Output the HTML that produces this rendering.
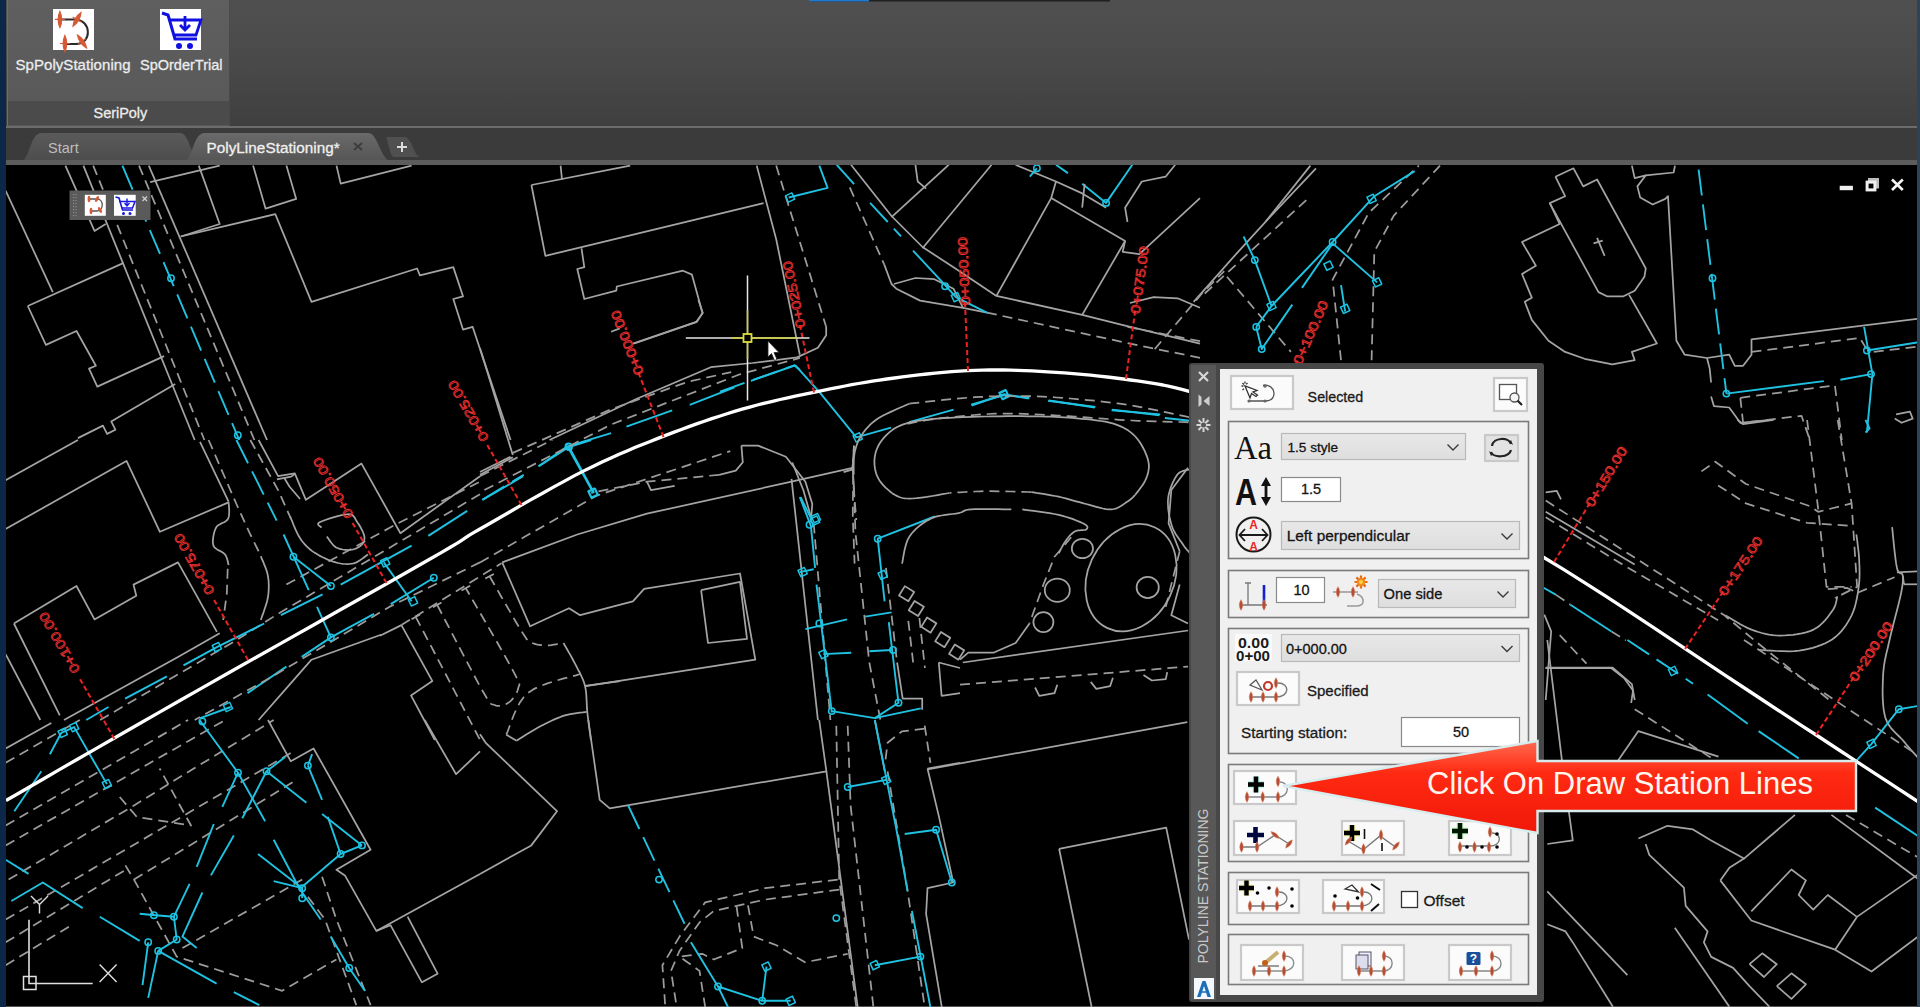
<!DOCTYPE html>
<html><head><meta charset="utf-8">
<style>
html,body{margin:0;padding:0;width:1920px;height:1007px;overflow:hidden;background:#000;font-family:"Liberation Sans",sans-serif;}
.a{position:absolute;box-sizing:border-box;}
svg.a{left:0;top:0;}
</style></head><body>
<svg class="a" width="1920" height="1007" viewBox="0 0 1920 1007">
<defs><linearGradient id="hdrg" x1="0" y1="0" x2="0" y2="1"><stop offset="0" stop-color="#4f4f4f"/><stop offset="0.15" stop-color="#4e4e4e"/><stop offset="0.5" stop-color="#494949"/><stop offset="1" stop-color="#3f3f3f"/></linearGradient><linearGradient id="rpg" x1="0" y1="0" x2="0" y2="1"><stop offset="0" stop-color="#5f5f5f"/><stop offset="1" stop-color="#585858"/></linearGradient><linearGradient id="tabg" x1="0" y1="0" x2="0" y2="1"><stop offset="0" stop-color="#6a6a6a"/><stop offset="1" stop-color="#555"/></linearGradient><linearGradient id="tab2g" x1="0" y1="0" x2="0" y2="1"><stop offset="0" stop-color="#5a5a5a"/><stop offset="1" stop-color="#4c4c4c"/></linearGradient><clipPath id="cvclip"><rect x="6" y="165" width="1911" height="842"/></clipPath></defs><rect x="0" y="0" width="1920" height="127" fill="url(#hdrg)"/><rect x="809" y="0" width="301" height="1.5" fill="#202020"/><rect x="809" y="0" width="60" height="1.5" fill="#1e7ad0"/><rect x="7" y="0" width="223" height="126" fill="url(#rpg)"/><rect x="7" y="0" width="1" height="126" fill="#6e6e6e"/><rect x="229" y="0" width="1" height="126" fill="#4a4a4a"/><rect x="8" y="101" width="221" height="24" fill="#4b4b4b"/><rect x="53" y="9" width="41" height="41" fill="#fff"/><path d="M60 19.5 H75 C92 20 92 44 76 44 H65" fill="none" stroke="#2a2a2a" stroke-width="2"/><path d="M59.9 11.399999999999999 Q63.5 19.4 59.9 27.4 Q56.3 19.4 59.9 11.399999999999999Z M54.9 19.4 H64.9" fill="#d65a36" stroke="#d65a36" stroke-width="1.2" transform="rotate(0 59.9 19.4)"/><path d="M77 11.399999999999999 Q80.6 19.4 77 27.4 Q73.4 19.4 77 11.399999999999999Z M72 19.4 H82" fill="#d65a36" stroke="#d65a36" stroke-width="1.2" transform="rotate(30 77 19.4)"/><path d="M64.9 35.5 Q68.5 43.5 64.9 51.5 Q61.300000000000004 43.5 64.9 35.5Z M59.900000000000006 43.5 H69.9" fill="#d65a36" stroke="#d65a36" stroke-width="1.2" transform="rotate(0 64.9 43.5)"/><path d="M82 33.5 Q85.6 41.5 82 49.5 Q78.4 41.5 82 33.5Z M77 41.5 H87" fill="#d65a36" stroke="#d65a36" stroke-width="1.2" transform="rotate(-35 82 41.5)"/><rect x="160" y="9" width="41" height="41" fill="#fff"/><path d="M162 13 L168 15 L175 39 H197" fill="none" stroke="#1010e0" stroke-width="3"/><path d="M170 20 H201 L196 35 H175" fill="none" stroke="#1010e0" stroke-width="2.8"/><path d="M185 16 V29 M180 25 L185 30 L190 25" fill="none" stroke="#1010e0" stroke-width="2.8"/><circle cx="179" cy="46" r="3" fill="#1010e0"/><circle cx="190" cy="46" r="3" fill="#1010e0"/><text x="15.5" y="69.7" font-size="15" fill="#ececec" stroke="#ececec" stroke-width="0.3" font-family="Liberation Sans, sans-serif" textLength="115">SpPolyStationing</text><text x="140" y="69.7" font-size="14.5" fill="#ececec" stroke="#ececec" stroke-width="0.3" font-family="Liberation Sans, sans-serif" textLength="82.5">SpOrderTrial</text><text x="93.6" y="118" font-size="14.5" fill="#ececec" stroke="#ececec" stroke-width="0.3" font-family="Liberation Sans, sans-serif" textLength="53.6">SeriPoly</text><rect x="0" y="126" width="1920" height="2" fill="#6c6c6c"/><rect x="0" y="128" width="1920" height="33" fill="#3b3b3b"/><path d="M22 161 C30 158 30 133 42 133 H180 C190 133 190 158 200 161 Z" fill="url(#tab2g)"/><path d="M185 161 C193 158 193 133 205 133 H368 C378 133 380 158 390 161 Z" fill="url(#tabg)"/><path d="M386 137 H404 C412 137 414 156 420 157 H394 C390 157 388 140 386 137 Z" fill="#505050"/><path d="M402 142 V152 M397 147 H407" stroke="#dcdcdc" stroke-width="2"/><text x="48" y="152.5" font-size="14.5" fill="#bdbdbd" font-family="Liberation Sans, sans-serif" textLength="30.7">Start</text><text x="206.4" y="152.5" font-size="15.3" fill="#f0f0f0" stroke="#f0f0f0" stroke-width="0.3" font-family="Liberation Sans, sans-serif" textLength="133.4">PolyLineStationing*</text><path d="M354 143 L362 150 M362 143 L354 150" stroke="#3c3c3c" stroke-width="1.8"/><rect x="0" y="160" width="1920" height="5" fill="#5c5c5c"/><rect x="6" y="165" width="1911" height="842" fill="#000"/><rect x="0" y="1006" width="1920" height="1" fill="#555"/><rect x="0" y="0" width="6" height="1007" fill="#0c2748"/><rect x="1917" y="0" width="3" height="1007" fill="#2e4358"/>
<g clip-path="url(#cvclip)" fill="none" stroke-linejoin="round"><path d="M5.6 190.6 L52.8 292.1" stroke="#a4a4a4" stroke-width="1.75"/><path d="M27.8 306.0 L123.7 262.9" stroke="#a4a4a4" stroke-width="1.75"/><path d="M27.8 306.0 L45.9 344.9 L76.5 331.0 L95.9 365.8 L89.0 368.6 L97.3 386.6 L164.1 356.1" stroke="#a4a4a4" stroke-width="1.75"/><path d="M150.2 182.2 L219.7 165.6" stroke="#a4a4a4" stroke-width="1.75"/><path d="M198.8 165.6 L219.7 224.0 L180.8 236.5" stroke="#a4a4a4" stroke-width="1.75"/><path d="M65.4 165.6 L94.5 230.9 L105.7 224.0" stroke="#a4a4a4" stroke-width="1.75"/><path d="M253.1 165.6 L265.6 208.7 L296.2 198.9 L286.4 165.6" stroke="#a4a4a4" stroke-width="1.75"/><path d="M180.8 236.5 L275.3 214.2 L311.5 301.8 L417.1 268.5 L419.9 275.4 L453.3 267.1 L463.0 296.3 L453.3 299.0 L463.0 329.6 L472.7 326.9 L480.0 349.1" stroke="#a4a4a4" stroke-width="1.75"/><path d="M336.5 165.6 L340.7 183.6 L411.6 165.6" stroke="#a4a4a4" stroke-width="1.75"/><path d="M77.9 438.1 L102.9 425.6 L107.1 433.9 L115.4 429.7 L111.2 421.4 L175.2 383.9" stroke="#a4a4a4" stroke-width="1.75"/><path d="M83.4 165.6 L194.7 440.0" stroke="#a4a4a4" stroke-width="1.75"/><path d="M93.2 165.6 L204.4 440.0" stroke="#9c9c9c" stroke-width="1.75" stroke-dasharray="10 6"/><path d="M122.4 165.6 L239.2 440.0" stroke="#20c2e2" stroke-width="1.9" stroke-dasharray="26 9"/><path d="M139.0 165.6 L254.4 440.0" stroke="#9c9c9c" stroke-width="1.75" stroke-dasharray="10 6"/><path d="M148.8 165.6 L267.0 440.0" stroke="#a4a4a4" stroke-width="1.75"/><circle cx="171.0" cy="278.2" r="3.2" stroke="#1cc4e4" stroke-width="1.5"/><circle cx="237.8" cy="435.3" r="3.2" stroke="#1cc4e4" stroke-width="1.5"/><path d="M560.6 165.6 L562.0 179.5" stroke="#a4a4a4" stroke-width="1.75"/><path d="M531.4 185.0 L630.2 165.6" stroke="#a4a4a4" stroke-width="1.75"/><path d="M531.4 185.0 L545.4 255.9 L763.6 203.1" stroke="#a4a4a4" stroke-width="1.75"/><path d="M581.5 248.4 L584.3 267.1 L577.3 269.0 L584.3 299.0 L616.3 290.7 L616.8 286.5 L683.0 270.7 L691.9 274.6 L702.5 312.9 L696.9 321.8 L634.3 343.5" stroke="#a4a4a4" stroke-width="1.75"/><path d="M480.0 349.1 L510.6 440.0" stroke="#a4a4a4" stroke-width="1.75"/><path d="M756.7 165.6 L776.2 239.3 L799.8 354.7" stroke="#a4a4a4" stroke-width="1.75"/><path d="M776.2 165.6 L826.2 326.9" stroke="#9c9c9c" stroke-width="1.75" stroke-dasharray="10 6"/><path d="M826.2 326.9 L826.2 335.2 L817.9 347.7 L797.0 357.4 L752.5 363.0 L710.8 367.2 L635.7 399.2 L549.5 440.0" stroke="#a4a4a4" stroke-width="1.75"/><path d="M819.3 165.6 L827.6 187.8 L788.7 197.5" stroke="#20c2e2" stroke-width="1.9"/><rect x="786.6" y="194.0" width="7" height="7" stroke="#1cc4e4" stroke-width="1.5" transform="rotate(-25 790.1 197.5)"/><path d="M1193.6 301.8 L1238.1 251.8 L1268.7 218.4 L1316.0 168.3" stroke="#a4a4a4" stroke-width="1.75"/><path d="M1154.7 349.1 L1201.9 293.5 L1224.2 271.2" stroke="#9c9c9c" stroke-width="1.75" stroke-dasharray="10 6"/><path d="M1204.7 293.5 L1307.6 198.9" stroke="#9c9c9c" stroke-width="1.75" stroke-dasharray="10 6"/><path d="M1227.0 276.8 L1290.9 351.9" stroke="#9c9c9c" stroke-width="1.75" stroke-dasharray="10 6"/><path d="M1265.9 221.2 L1310.4 165.6" stroke="#a4a4a4" stroke-width="1.75"/><path d="M1371.6 360.2 L1374.3 251.8 L1393.8 215.6 L1440.0 165.6" stroke="#9c9c9c" stroke-width="1.75" stroke-dasharray="10 6"/><path d="M1341.0 360.2 L1332.6 279.6 L1368.8 212.8 L1418.8 165.6" stroke="#9c9c9c" stroke-width="1.75" stroke-dasharray="10 6"/><path d="M1243.6 236.5 L1254.8 260.1 L1271.5 306.0 L1302.0 274.0 L1332.6 242.0 L1374.3 196.2 L1414.7 171.1" stroke="#20c2e2" stroke-width="1.9"/><path d="M1256.2 326.9 L1261.7 349.1 L1292.3 304.6" stroke="#20c2e2" stroke-width="1.9"/><path d="M1256.2 326.9 L1271.5 306.0" stroke="#20c2e2" stroke-width="1.9"/><path d="M1332.6 243.4 L1377.1 282.4" stroke="#20c2e2" stroke-width="1.9"/><path d="M1302.0 287.9 L1332.6 243.4" stroke="#20c2e2" stroke-width="1.9"/><path d="M1341.0 285.1 L1345.2 311.6" stroke="#20c2e2" stroke-width="1.9"/><circle cx="1254.8" cy="260.1" r="3.2" stroke="#1cc4e4" stroke-width="1.5"/><rect x="1268.0" y="302.5" width="7" height="7" stroke="#1cc4e4" stroke-width="1.5" transform="rotate(-25 1271.5 306.0)"/><circle cx="1256.2" cy="326.9" r="3.2" stroke="#1cc4e4" stroke-width="1.5"/><circle cx="1261.7" cy="349.1" r="3.2" stroke="#1cc4e4" stroke-width="1.5"/><circle cx="1332.6" cy="242.0" r="3.2" stroke="#1cc4e4" stroke-width="1.5"/><rect x="1373.6" y="278.9" width="7" height="7" stroke="#1cc4e4" stroke-width="1.5" transform="rotate(-25 1377.1 282.4)"/><rect x="1341.7" y="305.3" width="7" height="7" stroke="#1cc4e4" stroke-width="1.5" transform="rotate(-25 1345.2 308.8)"/><rect x="1325.0" y="262.2" width="7" height="7" stroke="#1cc4e4" stroke-width="1.5" transform="rotate(-25 1328.5 265.7)"/><rect x="1368.1" y="195.4" width="7" height="7" stroke="#1cc4e4" stroke-width="1.5" transform="rotate(-25 1371.6 198.9)"/><path d="M971.1 404.7 L1004.5 395.0 L1029.5 397.8" stroke="#20c2e2" stroke-width="1.9"/><rect x="1001.0" y="391.5" width="7" height="7" stroke="#1cc4e4" stroke-width="1.5" transform="rotate(-25 1004.5 395.0)"/><path d="M1049.0 400.5 L1094.9 407.5" stroke="#20c2e2" stroke-width="1.9"/><path d="M1111.6 410.3 L1160.2 414.4" stroke="#20c2e2" stroke-width="1.9"/><path d="M1555.4 176.7 L1573.5 168.3 L1583.2 186.4 L1597.1 179.5 L1645.8 268.5 L1644.4 276.8 L1634.7 290.7 L1623.5 296.3 L1606.9 296.3 L1598.5 292.1 L1549.8 203.1 L1565.1 196.2 L1555.4 176.7" stroke="#a4a4a4" stroke-width="1.75"/><path d="M1549.8 203.1 L1559.6 224.0 L1522.0 242.0 L1535.9 265.7 L1522.0 274.0 L1531.8 297.7 L1524.8 301.8 L1531.8 319.9 L1548.5 340.8 L1565.1 351.9 L1584.6 358.8 L1612.4 364.4 L1634.7 360.2 L1631.9 351.9 L1656.9 343.5 L1629.1 294.9" stroke="#a4a4a4" stroke-width="1.75"/><path d="M1593.5 243.4 L1602.7 240.6" stroke="#a4a4a4" stroke-width="1.75"/><path d="M1597.1 237.9 L1604.6 255.9" stroke="#a4a4a4" stroke-width="1.75"/><path d="M1631.9 165.6 L1634.7 178.1 L1645.8 175.3 L1637.4 186.4 L1640.2 197.5 L1652.7 204.5 L1665.3 198.9 L1668.0 196.2 L1676.4 340.8 L1684.7 354.7 L1707.0 358.0 L1729.2 354.7 L1734.8 365.8 L1743.1 365.8 L1751.5 354.7 L1751.5 339.4 L1920.0 318.5" stroke="#a4a4a4" stroke-width="1.75"/><path d="M1645.8 175.3 L1673.6 172.5 L1675.0 165.6" stroke="#a4a4a4" stroke-width="1.75"/><path d="M1707.0 358.0 L1709.7 368.6 L1711.1 382.5" stroke="#a4a4a4" stroke-width="1.75"/><path d="M1711.1 396.4 L1713.9 406.1 L1729.2 407.5 L1740.3 422.8 L1768.1 420.0" stroke="#a4a4a4" stroke-width="1.75"/><path d="M1751.5 351.9 L1859.9 338.0 L1868.3 351.9" stroke="#9c9c9c" stroke-width="1.75" stroke-dasharray="10 6"/><path d="M1873.8 351.9 L1920.0 346.3" stroke="#9c9c9c" stroke-width="1.75" stroke-dasharray="10 6"/><path d="M1740.3 397.8 L1834.9 385.3 L1841.8 440.0" stroke="#9c9c9c" stroke-width="1.75" stroke-dasharray="10 6"/><path d="M1740.3 397.8 L1743.1 422.8 L1801.5 415.8 L1809.9 440.0" stroke="#9c9c9c" stroke-width="1.75" stroke-dasharray="10 6"/><path d="M1698.6 169.7 L1726.4 393.6" stroke="#20c2e2" stroke-width="1.9" stroke-dasharray="26 9"/><path d="M1726.4 393.6 L1823.8 381.1" stroke="#20c2e2" stroke-width="1.9"/><path d="M1840.4 379.7 L1871.0 374.1" stroke="#20c2e2" stroke-width="1.9"/><path d="M1864.1 326.9 L1872.4 374.1 L1866.9 432.5" stroke="#20c2e2" stroke-width="1.9"/><path d="M1866.9 350.5 L1920.0 342.1" stroke="#20c2e2" stroke-width="1.9"/><circle cx="1712.5" cy="278.2" r="3.2" stroke="#1cc4e4" stroke-width="1.5"/><circle cx="1726.4" cy="393.6" r="3.2" stroke="#1cc4e4" stroke-width="1.5"/><circle cx="1866.9" cy="350.5" r="3.2" stroke="#1cc4e4" stroke-width="1.5"/><circle cx="1871.0" cy="374.1" r="3.2" stroke="#1cc4e4" stroke-width="1.5"/><path d="M1896.1 414.4 L1910.0 411.7 L1912.7 418.6 L1901.6 422.8 L1894.7 418.6" stroke="#a4a4a4" stroke-width="1.75"/><path d="M5.6 480.3 L77.9 440.0" stroke="#a4a4a4" stroke-width="1.75"/><path d="M5.6 529.0 L126.5 460.9 L159.9 531.8 L228.0 502.6" stroke="#a4a4a4" stroke-width="1.75"/><path d="M13.9 623.5 L76.5 586.0 L94.5 619.4 L136.3 595.7 L133.5 584.6 L178.0 562.4 L216.9 631.9" stroke="#a4a4a4" stroke-width="1.75"/><path d="M13.9 623.5 L59.8 715.3" stroke="#a4a4a4" stroke-width="1.75"/><path d="M5.6 654.1 L40.3 720.0" stroke="#a4a4a4" stroke-width="1.75"/><path d="M208.6 440.0 L236.4 504.0 L250.3 534.5 L261.4 556.8" stroke="#9c9c9c" stroke-width="1.75" stroke-dasharray="10 6"/><path d="M258.6 440.0 L278.1 476.2 L294.8 473.4 L305.9 499.8 L361.5 463.6 L400.4 533.2 L480.0 476.2" stroke="#a4a4a4" stroke-width="1.75"/><path d="M250.3 440.0 L278.1 490.1 L290.6 517.9" stroke="#9c9c9c" stroke-width="1.75" stroke-dasharray="10 6"/><path d="M64.0 720.0 L178.0 656.9 L219.7 633.3" stroke="#a4a4a4" stroke-width="1.75"/><path d="M100.1 720.0 L236.4 640.2 L278.1 613.8 L480.0 494.2" stroke="#9c9c9c" stroke-width="1.75" stroke-dasharray="10 6"/><path d="M286.4 584.6 L397.7 523.4 L480.0 481.7" stroke="#9c9c9c" stroke-width="1.75" stroke-dasharray="10 6"/><path d="M86.2 720.0 L108.5 707.0" stroke="#20c2e2" stroke-width="1.9" stroke-dasharray="26 9"/><path d="M125.1 698.6 L166.9 676.4" stroke="#20c2e2" stroke-width="1.9"/><path d="M183.5 665.3 L216.9 647.2 L264.2 623.5" stroke="#20c2e2" stroke-width="1.9"/><path d="M280.9 615.2 L322.6 594.3" stroke="#20c2e2" stroke-width="1.9"/><path d="M340.7 584.6 L411.6 545.7" stroke="#20c2e2" stroke-width="1.9"/><path d="M428.3 535.9 L467.2 510.9" stroke="#20c2e2" stroke-width="1.9"/><path d="M390.7 604.1 L433.8 577.7" stroke="#20c2e2" stroke-width="1.9"/><path d="M301.7 656.9 L330.9 637.4 L374.0 613.8" stroke="#20c2e2" stroke-width="1.9"/><path d="M247.5 693.1 L286.4 666.6" stroke="#20c2e2" stroke-width="1.9"/><path d="M200.2 718.1 L230.8 707.0" stroke="#20c2e2" stroke-width="1.9"/><path d="M480.0 562.4 L389.3 606.9 L333.7 640.2 L272.5 676.4 L194.7 720.0" stroke="#9c9c9c" stroke-width="1.75" stroke-dasharray="10 6"/><path d="M258.6 720.0 L292.0 681.9 L311.5 659.7 L350.4 645.8 L381.0 634.7" stroke="#a4a4a4" stroke-width="1.75"/><path d="M293.4 556.8 L330.9 586.0" stroke="#20c2e2" stroke-width="1.9"/><path d="M283.6 534.5 L308.7 590.2" stroke="#20c2e2" stroke-width="1.9"/><path d="M383.8 562.4 L411.6 601.3" stroke="#20c2e2" stroke-width="1.9"/><path d="M317.0 606.9 L330.9 637.4" stroke="#20c2e2" stroke-width="1.9"/><circle cx="293.4" cy="556.8" r="3.2" stroke="#1cc4e4" stroke-width="1.5"/><circle cx="330.9" cy="586.0" r="3.2" stroke="#1cc4e4" stroke-width="1.5"/><rect x="381.7" y="558.9" width="7" height="7" stroke="#1cc4e4" stroke-width="1.5" transform="rotate(-25 385.2 562.4)"/><rect x="409.5" y="597.8" width="7" height="7" stroke="#1cc4e4" stroke-width="1.5" transform="rotate(-25 413.0 601.3)"/><circle cx="433.8" cy="577.7" r="3.2" stroke="#1cc4e4" stroke-width="1.5"/><rect x="213.4" y="643.7" width="7" height="7" stroke="#1cc4e4" stroke-width="1.5" transform="rotate(-25 216.9 647.2)"/><circle cx="330.9" cy="637.4" r="3.2" stroke="#1cc4e4" stroke-width="1.5"/><rect x="224.5" y="703.5" width="7" height="7" stroke="#1cc4e4" stroke-width="1.5" transform="rotate(-25 228.0 707.0)"/><path d="M538.4 466.4 L569.0 447.0 L591.2 440.0" stroke="#20c2e2" stroke-width="1.9"/><path d="M569.0 447.0 L594.0 492.8" stroke="#20c2e2" stroke-width="1.9"/><circle cx="569.0" cy="447.0" r="3.2" stroke="#1cc4e4" stroke-width="1.5"/><rect x="589.1" y="489.3" width="7" height="7" stroke="#1cc4e4" stroke-width="1.5" transform="rotate(-25 592.6 492.8)"/><path d="M482.8 499.8 L523.1 476.2" stroke="#20c2e2" stroke-width="1.9"/><path d="M480.0 476.2 L552.3 440.0" stroke="#9c9c9c" stroke-width="1.75" stroke-dasharray="10 6"/><path d="M480.0 562.4 L596.8 495.6 L730.3 451.1" stroke="#9c9c9c" stroke-width="1.75" stroke-dasharray="10 6"/><path d="M741.4 445.6 L742.8 462.2 L735.8 470.6 L719.2 474.8" stroke="#a4a4a4" stroke-width="1.75"/><path d="M719.2 474.8 L646.9 481.7 L591.2 492.8" stroke="#9c9c9c" stroke-width="1.75" stroke-dasharray="10 6"/><path d="M646.9 481.7 L651.0 490.1 L674.7 485.9" stroke="#a4a4a4" stroke-width="1.75"/><path d="M480.0 472.0 L510.6 456.7" stroke="#a4a4a4" stroke-width="1.75"/><path d="M741.4 445.6 L758.1 445.6 L785.9 456.7 L805.4 481.7 L812.3 504.0 L810.9 520.6" stroke="#a4a4a4" stroke-width="1.75"/><path d="M502.2 562.4 L577.3 534.5 L646.9 513.7 L791.5 481.7" stroke="#a4a4a4" stroke-width="1.75"/><path d="M791.5 481.7 L852.6 467.8" stroke="#a4a4a4" stroke-width="1.75"/><path d="M852.6 467.8 L854.0 445.6" stroke="#9c9c9c" stroke-width="1.75" stroke-dasharray="10 6"/><path d="M502.2 562.4 L530.1 626.3 L569.0 608.2 L580.1 615.2 L632.9 601.3 L644.1 588.8 L740.0 573.5 L755.3 659.7 L585.7 686.1" stroke="#a4a4a4" stroke-width="1.75"/><path d="M701.1 590.2 L740.0 581.8 L747.0 638.8 L708.0 643.0 L701.1 590.2" stroke="#a4a4a4" stroke-width="1.75"/><path d="M791.5 478.9 L817.9 720.0" stroke="#a4a4a4" stroke-width="1.75"/><path d="M813.7 523.4 L830.4 720.0" stroke="#9c9c9c" stroke-width="1.75" stroke-dasharray="10 6"/><path d="M854.0 487.3 L855.4 531.8 L869.3 662.5 L880.4 720.0" stroke="#9c9c9c" stroke-width="1.75" stroke-dasharray="10 6"/><path d="M854.0 445.6 L852.6 467.8 L854.0 487.3" stroke="#a4a4a4" stroke-width="1.75"/><path d="M886.0 567.9 L897.1 662.5" stroke="#9c9c9c" stroke-width="1.75" stroke-dasharray="10 6"/><path d="M908.3 620.8 L913.8 668.0" stroke="#9c9c9c" stroke-width="1.75" stroke-dasharray="10 6"/><path d="M919.4 618.0 L924.9 668.0" stroke="#9c9c9c" stroke-width="1.75" stroke-dasharray="10 6"/><path d="M897.1 662.5 L902.7 698.6 L922.2 698.6 L922.2 709.7" stroke="#a4a4a4" stroke-width="1.75"/><path d="M938.8 662.5 L960.0 668.0" stroke="#a4a4a4" stroke-width="1.75"/><path d="M938.8 662.5 L941.6 695.8 L960.0 693.1" stroke="#a4a4a4" stroke-width="1.75"/><path d="M799.8 497.0 L810.9 526.2 L815.1 567.9" stroke="#20c2e2" stroke-width="1.9"/><rect x="811.6" y="517.1" width="7" height="7" stroke="#1cc4e4" stroke-width="1.5" transform="rotate(-25 815.1 520.6)"/><circle cx="809.5" cy="524.8" r="3.2" stroke="#1cc4e4" stroke-width="1.5"/><path d="M799.8 572.1 L813.7 569.3" stroke="#20c2e2" stroke-width="1.9"/><rect x="799.1" y="568.6" width="7" height="7" stroke="#1cc4e4" stroke-width="1.5" transform="rotate(-25 802.6 572.1)"/><path d="M816.5 584.6 L831.8 712.5" stroke="#20c2e2" stroke-width="1.9"/><path d="M805.4 629.1 L847.1 619.4" stroke="#20c2e2" stroke-width="1.9"/><path d="M823.4 654.1 L851.2 652.7" stroke="#20c2e2" stroke-width="1.9"/><circle cx="819.3" cy="623.5" r="3.2" stroke="#1cc4e4" stroke-width="1.5"/><rect x="819.9" y="650.6" width="7" height="7" stroke="#1cc4e4" stroke-width="1.5" transform="rotate(-25 823.4 654.1)"/><circle cx="831.8" cy="711.1" r="3.2" stroke="#1cc4e4" stroke-width="1.5"/><path d="M934.7 516.5 L877.7 538.7 L884.6 601.3" stroke="#20c2e2" stroke-width="1.9"/><circle cx="877.7" cy="538.7" r="3.2" stroke="#1cc4e4" stroke-width="1.5"/><rect x="879.2" y="571.4" width="7" height="7" stroke="#1cc4e4" stroke-width="1.5" transform="rotate(-25 882.7 574.9)"/><path d="M865.2 616.6 L891.6 612.4" stroke="#20c2e2" stroke-width="1.9"/><path d="M869.3 651.3 L891.6 650.0" stroke="#20c2e2" stroke-width="1.9"/><path d="M888.8 622.1 L898.5 702.8 L874.9 718.1" stroke="#20c2e2" stroke-width="1.9"/><path d="M831.8 711.1 L874.9 718.1 L920.8 708.4" stroke="#20c2e2" stroke-width="1.9"/><circle cx="893.0" cy="650.0" r="3.2" stroke="#1cc4e4" stroke-width="1.5"/><circle cx="898.5" cy="702.8" r="3.2" stroke="#1cc4e4" stroke-width="1.5"/><path d="M792.3 462.5 L803.4 490.3 L811.8 520.0" stroke="#a4a4a4" stroke-width="1.75"/><path d="M720.0 391.6 L795.1 365.1" stroke="#20c2e2" stroke-width="1.9" stroke-dasharray="26 9"/><path d="M795.1 365.1 L820.1 392.9 L856.3 437.4 L891.0 427.7" stroke="#20c2e2" stroke-width="1.9"/><rect x="854.2" y="433.9" width="7" height="7" stroke="#1cc4e4" stroke-width="1.5" transform="rotate(-25 857.7 437.4)"/><path d="M909.1 422.1 L953.6 409.6" stroke="#20c2e2" stroke-width="1.9"/><path d="M971.7 405.5 L1003.6 394.3 L1028.7 398.5" stroke="#20c2e2" stroke-width="1.9"/><rect x="1000.1" y="390.8" width="7" height="7" stroke="#1cc4e4" stroke-width="1.5" transform="rotate(-25 1003.6 394.3)"/><path d="M1048.1 400.7 L1095.4 406.9" stroke="#20c2e2" stroke-width="1.9"/><path d="M1112.1 409.6 L1159.4 415.2" stroke="#20c2e2" stroke-width="1.9"/><path d="M1164.9 418.0 L1190.0 420.8" stroke="#20c2e2" stroke-width="1.9"/><path d="M800.6 497.2 L811.8 520.0" stroke="#20c2e2" stroke-width="1.9"/><rect x="812.4" y="514.6" width="7" height="7" stroke="#1cc4e4" stroke-width="1.5" transform="rotate(-25 815.9 518.1)"/><path d="M853.5 486.1 L856.3 520.0" stroke="#9c9c9c" stroke-width="1.75" stroke-dasharray="10 6"/><path d="M1071.2 537.3 L1054.5 556.8 L1043.4 584.6 L1029.5 623.5" stroke="#9c9c9c" stroke-width="1.75" stroke-dasharray="10 6"/><path d="M1029.5 623.5 L1015.6 643.0 L993.4 652.7 L968.3 652.7 L960.0 659.7" stroke="#a4a4a4" stroke-width="1.75"/><path d="M1188.0 467.8 L1171.3 490.1 L1168.6 523.4 L1179.7 551.2" stroke="#a4a4a4" stroke-width="1.75"/><path d="M1179.7 551.2 L1171.3 584.6 L1165.8 606.9" stroke="#9c9c9c" stroke-width="1.75" stroke-dasharray="10 6"/><path d="M962.8 662.5 L1188.0 630.5" stroke="#a4a4a4" stroke-width="1.75"/><path d="M960.0 684.7 L1188.0 666.6" stroke="#9c9c9c" stroke-width="1.75" stroke-dasharray="10 6"/><path d="M1035.1 687.5 L1039.3 695.8 L1054.5 693.1 L1057.3 684.7" stroke="#a4a4a4" stroke-width="1.75"/><path d="M1090.7 681.9 L1096.3 688.9 L1110.2 686.1 L1112.9 677.8" stroke="#a4a4a4" stroke-width="1.75"/><path d="M1143.5 675.0 L1151.9 680.5 L1165.8 679.2 L1167.2 672.2" stroke="#a4a4a4" stroke-width="1.75"/><path d="M1179.7 584.6 L1171.3 615.2 L1188.0 623.5" stroke="#a4a4a4" stroke-width="1.75"/><path d="M851.0 164.8 L891.5 216.0 L922.5 247.0 L953.5 267.3 L996.4 295.9 L1082.2 314.9 L1125.1 325.7 L1200.0 343.6" stroke="#a4a4a4" stroke-width="1.75"/><path d="M849.8 187.4 L884.4 264.9" stroke="#9c9c9c" stroke-width="1.75" stroke-dasharray="10 6"/><path d="M884.4 264.9 L891.5 284.0 L896.3 288.7 L920.1 300.6 L963.0 307.8 L986.9 312.6" stroke="#a4a4a4" stroke-width="1.75"/><path d="M893.9 284.0 L915.4 278.0 L934.4 279.2 L953.5 288.7 L963.0 307.8" stroke="#a4a4a4" stroke-width="1.75"/><path d="M986.9 312.6 L1129.9 343.6 L1200.0 357.9" stroke="#9c9c9c" stroke-width="1.75" stroke-dasharray="10 6"/><path d="M891.5 217.2 L948.7 164.8" stroke="#a4a4a4" stroke-width="1.75"/><path d="M922.5 248.2 L991.6 164.8" stroke="#a4a4a4" stroke-width="1.75"/><path d="M996.4 295.9 L1051.2 198.1 L1125.1 241.0 L1082.2 314.9" stroke="#a4a4a4" stroke-width="1.75"/><path d="M1051.2 198.1 L1056.0 181.5 L1015.5 164.8" stroke="#a4a4a4" stroke-width="1.75"/><path d="M1056.0 181.5 L1082.2 193.4 L1106.1 207.7" stroke="#a4a4a4" stroke-width="1.75"/><path d="M1125.1 241.0 L1122.7 251.8 L1139.4 254.2 L1200.0 198.1" stroke="#a4a4a4" stroke-width="1.75"/><path d="M1129.9 303.0 L1153.7 297.1 L1177.6 298.3 L1200.0 307.8" stroke="#a4a4a4" stroke-width="1.75"/><path d="M1127.5 222.0 L1125.1 207.7 L1141.8 181.5 L1165.6 176.7 L1175.2 164.8" stroke="#a4a4a4" stroke-width="1.75"/><path d="M913.0 250.6 L946.3 286.3 L955.9 297.1 L986.9 312.6" stroke="#20c2e2" stroke-width="1.9"/><circle cx="945.1" cy="286.3" r="3.2" stroke="#1cc4e4" stroke-width="1.5"/><rect x="952.4" y="293.6" width="7" height="7" stroke="#1cc4e4" stroke-width="1.5" transform="rotate(-25 955.9 297.1)"/><path d="M836.7 164.8 L858.1 188.6" stroke="#20c2e2" stroke-width="1.9" stroke-dasharray="26 9"/><path d="M870.1 202.9 L901.0 236.3" stroke="#20c2e2" stroke-width="1.9" stroke-dasharray="26 9"/><path d="M1029.8 176.7 L1036.9 168.3" stroke="#20c2e2" stroke-width="1.9"/><path d="M1056.0 164.8 L1067.9 173.1" stroke="#20c2e2" stroke-width="1.9"/><path d="M1082.2 183.8 L1106.1 202.9 L1132.3 164.8" stroke="#20c2e2" stroke-width="1.9"/><circle cx="1036.9" cy="168.3" r="3.2" stroke="#1cc4e4" stroke-width="1.5"/><circle cx="1106.1" cy="202.9" r="3.2" stroke="#1cc4e4" stroke-width="1.5"/><path d="M1127.5 326.9 L1200.0 341.2" stroke="#9c9c9c" stroke-width="1.75" stroke-dasharray="10 6"/><path d="M1082.2 207.7 L1084.6 183.8" stroke="#a4a4a4" stroke-width="1.75"/><path d="M915.4 164.8 L917.7 181.5 L926.1 188.6" stroke="#a4a4a4" stroke-width="1.75"/><path d="M482.2 499.9 L523.7 474.7" stroke="#20c2e2" stroke-width="1.9" stroke-dasharray="26 9"/><path d="M539.0 466.0 L567.4 446.4 L611.1 433.2" stroke="#20c2e2" stroke-width="1.9"/><path d="M626.4 426.7 L672.2 410.3" stroke="#20c2e2" stroke-width="1.9"/><path d="M689.7 404.8 L734.5 387.4" stroke="#20c2e2" stroke-width="1.9"/><path d="M750.9 380.8 L794.5 365.5 L800.0 369.9" stroke="#20c2e2" stroke-width="1.9"/><path d="M567.4 446.4 L593.6 493.3" stroke="#20c2e2" stroke-width="1.9"/><circle cx="568.5" cy="446.4" r="3.2" stroke="#1cc4e4" stroke-width="1.5"/><rect x="590.1" y="489.8" width="7" height="7" stroke="#1cc4e4" stroke-width="1.5" transform="rotate(-25 593.6 493.3)"/><path d="M484.4 490.0 L611.1 424.5 L739.9 374.3 L800.0 357.9" stroke="#9c9c9c" stroke-width="1.75" stroke-dasharray="10 6"/><path d="M512.8 452.9 L611.1 409.2 L687.5 381.9 L731.2 372.1" stroke="#9c9c9c" stroke-width="1.75" stroke-dasharray="10 6"/><path d="M480.0 474.7 L512.8 457.3" stroke="#a4a4a4" stroke-width="1.75"/><path d="M480.0 348.1 L512.8 455.1" stroke="#a4a4a4" stroke-width="1.75"/><path d="M632.9 343.7 L696.3 321.8 L702.8 313.1 L698.4 300.0" stroke="#a4a4a4" stroke-width="1.75"/><path d="M611.1 331.7 L619.8 328.4" stroke="#a4a4a4" stroke-width="1.75"/><path d="M853.7 474.8 L853.7 473.1 L853.7 470.8 L853.7 468.0 L853.7 465.0 L853.8 461.8 L853.9 458.6 L854.2 455.6 L854.6 452.9 L855.1 450.4 L855.8 448.0 L856.5 445.7 L857.3 443.5 L858.2 441.2 L859.3 439.0 L860.5 436.9 L861.9 434.7 L863.4 432.6 L865.0 430.4 L866.7 428.3 L868.6 426.3 L870.7 424.2 L873.0 422.2 L875.5 420.3 L878.3 418.3 L881.7 416.3 L885.7 414.2 L890.2 412.1 L894.8 410.0 L899.3 408.0 L903.4 406.3 L906.8 404.8 L909.3 403.7" stroke="#a4a4a4" stroke-width="1.75"/><path d="M909.3 403.7 L913.8 403.2 L919.9 402.5 L927.1 401.7 L935.0 400.8 L943.4 399.9 L951.9 399.0 L960.1 398.3 L967.6 397.7 L974.6 397.2 L981.5 396.9 L988.4 396.5 L995.2 396.3 L1001.9 396.1 L1008.7 396.0 L1015.5 396.0 L1022.3 396.0 L1029.1 396.1 L1036.0 396.4 L1042.8 396.7 L1049.6 397.0 L1056.5 397.5 L1063.3 398.0 L1070.2 398.5 L1077.0 399.1 L1083.8 399.7 L1090.6 400.3 L1097.4 401.0 L1104.1 401.8 L1110.9 402.6 L1117.8 403.4 L1124.7 404.4 L1131.7 405.5 L1139.2 406.8 L1147.4 408.4 L1155.9 410.1 L1164.3 411.9 L1172.2 413.6 L1179.4 415.1 L1185.5 416.4 L1190.0 417.4" stroke="#9c9c9c" stroke-width="1.75" stroke-dasharray="10 6"/><path d="M853.1 474.8 L852.8 516.7 L854.6 563.6" stroke="#9c9c9c" stroke-width="1.75" stroke-dasharray="10 6"/><path d="M907.4 423.7 L909.8 423.3 L912.8 422.7 L916.4 422.0 L920.4 421.3 L924.9 420.5 L929.8 419.7 L934.9 419.0 L940.3 418.3 L946.1 417.6 L952.6 417.0 L959.6 416.3 L966.8 415.6 L974.1 415.0 L981.4 414.4 L988.4 414.0 L994.9 413.7 L1001.0 413.5 L1006.9 413.5 L1012.7 413.6 L1018.3 413.7 L1023.8 413.9 L1029.3 414.1 L1034.9 414.4 L1040.5 414.6 L1046.2 414.9 L1051.9 415.2 L1057.6 415.5 L1063.3 415.9 L1069.0 416.2 L1074.7 416.6 L1080.4 417.0 L1086.1 417.4 L1091.7 417.8 L1097.2 418.2 L1102.6 418.6 L1108.1 419.0 L1113.7 419.4 L1119.4 419.8 L1125.4 420.2 L1131.7 420.5 L1138.8 420.8 L1146.7 421.1 L1155.2 421.3 L1163.7 421.6 L1171.8 421.8 L1179.2 422.0 L1185.4 422.2 L1190.0 422.3" stroke="#9c9c9c" stroke-width="1.75" stroke-dasharray="10 6"/><path d="M949.4 493.0 L946.5 493.5 L942.4 494.2 L937.6 495.1 L932.3 496.0 L926.9 496.9 L921.6 497.6 L916.8 498.2 L912.9 498.5 L909.7 498.6 L907.0 498.5 L904.7 498.3 L902.5 498.0 L900.6 497.5 L898.7 496.8 L896.8 495.9 L894.7 494.8 L892.5 493.4 L890.2 491.7 L887.9 489.7 L885.6 487.6 L883.4 485.4 L881.5 483.1 L879.7 480.7 L878.3 478.4 L877.2 476.1 L876.2 473.6 L875.5 471.1 L875.0 468.5 L874.6 465.9 L874.5 463.4 L874.4 460.8 L874.6 458.4 L874.9 456.0 L875.4 453.6 L876.0 451.3 L876.9 449.0 L877.9 446.7 L879.0 444.5 L880.4 442.3 L881.9 440.2 L883.6 438.1 L885.4 436.1 L887.4 434.1 L889.6 432.2 L891.9 430.3 L894.5 428.6 L897.2 427.0 L900.2 425.6 L903.3 424.4 L906.5 423.3 L909.8 422.4 L913.4 421.7 L917.2 421.0 L921.4 420.3 L926.0 419.8 L931.1 419.2 L936.8 418.7 L943.1 418.2 L949.9 417.8 L957.0 417.4 L964.2 417.2 L971.6 416.9 L978.8 416.7 L985.8 416.5 L992.8 416.4 L999.9 416.3 L1007.1 416.2 L1014.3 416.2 L1021.3 416.2 L1028.1 416.3 L1034.5 416.4 L1040.5 416.5 L1045.9 416.6 L1050.9 416.7 L1055.5 416.9 L1059.9 417.1 L1064.1 417.3 L1068.3 417.6 L1072.6 417.9 L1077.0 418.3 L1081.7 418.8 L1086.4 419.2 L1091.3 419.7 L1096.1 420.3 L1100.8 421.0 L1105.3 421.7 L1109.5 422.6 L1113.4 423.7 L1116.9 424.9 L1120.1 426.1 L1123.1 427.5 L1125.8 429.0 L1128.4 430.6 L1130.8 432.4 L1133.1 434.3 L1135.3 436.5 L1137.4 439.0 L1139.5 441.8 L1141.4 444.8 L1143.2 448.0 L1144.8 451.2 L1146.1 454.4 L1147.3 457.4 L1148.1 460.2 L1148.6 462.8 L1148.9 465.2 L1148.9 467.5 L1148.6 469.8 L1148.2 471.9 L1147.7 474.1 L1147.0 476.2 L1146.2 478.4 L1145.2 480.6 L1143.9 483.0 L1142.3 485.4 L1140.6 487.7 L1139.0 489.9 L1137.5 491.9 L1136.2 493.5 L1135.3 494.8" stroke="#a4a4a4" stroke-width="1.75"/><path d="M1135.3 494.8 L1134.8 495.3 L1134.2 495.9 L1133.5 496.7 L1132.7 497.5 L1131.7 498.4 L1130.6 499.3 L1129.4 500.3 L1128.0 501.2 L1126.4 502.2 L1124.8 503.4 L1122.9 504.7 L1120.9 506.0 L1118.8 507.2 L1116.6 508.3 L1114.1 509.0 L1111.6 509.4 L1108.9 509.4 L1105.9 509.1 L1102.8 508.5 L1099.5 507.7 L1096.2 506.8 L1092.8 505.8 L1089.4 504.9 L1086.1 504.0 L1082.8 503.2 L1079.4 502.2 L1076.0 501.3 L1072.5 500.3 L1069.1 499.3 L1065.6 498.4 L1062.1 497.5 L1058.7 496.7 L1055.1 496.0 L1051.2 495.3 L1047.3 494.6 L1043.3 493.9 L1039.6 493.4 L1036.3 492.9 L1033.5 492.4 L1031.4 492.1" stroke="#a4a4a4" stroke-width="1.75"/><path d="M1031.4 492.1 L1027.8 492.0 L1023.0 491.9 L1017.2 491.7 L1010.9 491.5 L1004.2 491.4 L997.6 491.3 L991.4 491.2 L985.8 491.2 L980.6 491.3 L975.2 491.5 L969.9 491.8 L964.7 492.0 L960.0 492.3 L955.7 492.6 L952.1 492.8 L949.4 493.0" stroke="#9c9c9c" stroke-width="1.75" stroke-dasharray="10 6"/><path d="M902.0 563.6 L902.5 561.5 L903.0 558.6 L903.6 555.1 L904.3 551.3 L905.2 547.4 L906.3 543.5 L907.6 539.9 L909.3 536.8 L911.3 534.0 L913.6 531.3 L916.2 528.7 L918.9 526.3 L921.9 524.0 L924.9 522.0 L928.0 520.1 L931.1 518.5 L934.4 517.2 L937.9 516.2 L941.6 515.5 L945.4 514.9 L949.1 514.4 L952.6 514.0 L955.7 513.6 L958.5 513.1 L960.6 512.5 L962.1 512.0 L963.1 511.4 L964.1 510.9 L965.1 510.4 L966.4 510.0 L968.4 509.7 L971.2 509.4 L975.2 509.2 L980.2 509.1 L986.0 509.1 L992.0 509.2 L998.0 509.2 L1003.5 509.3 L1008.0 509.4 L1011.3 509.4" stroke="#a4a4a4" stroke-width="1.75"/><path d="M1022.3 509.4 L1025.2 509.8 L1029.1 510.3 L1033.8 510.9 L1038.9 511.6 L1044.2 512.3 L1049.5 513.1 L1054.4 514.0 L1058.7 514.9 L1062.6 515.9 L1066.4 517.0 L1070.1 518.2 L1073.7 519.4 L1076.9 520.7 L1079.8 521.9 L1082.3 523.0 L1084.3 524.0 L1085.8 524.9 L1086.7 525.7 L1087.3 526.5 L1087.5 527.2 L1087.4 527.9 L1087.1 528.5 L1086.7 529.0 L1086.1 529.5 L1085.3 529.9 L1084.2 530.0 L1082.8 530.1 L1081.3 530.2 L1079.6 530.3 L1078.0 530.4 L1076.5 530.8 L1075.1 531.3 L1073.9 532.1 L1072.6 533.0 L1071.5 534.0 L1070.3 535.2 L1069.2 536.4 L1068.1 537.7 L1067.0 539.0 L1066.0 540.4 L1065.0 541.9 L1063.9 543.6 L1062.8 545.5 L1061.8 547.4 L1060.8 549.2 L1060.0 550.8 L1059.3 552.2 L1058.7 553.2" stroke="#a4a4a4" stroke-width="1.75"/><path d="M1190.0 469.3 L1189.0 469.6 L1187.6 469.9 L1186.0 470.2 L1184.2 470.6 L1182.3 471.2 L1180.4 472.0 L1178.7 473.2 L1177.2 474.8 L1175.8 476.9 L1174.4 479.4 L1173.0 482.2 L1171.6 485.3 L1170.4 488.5 L1169.4 491.9 L1168.6 495.2 L1168.1 498.5 L1167.9 501.8 L1168.0 505.3 L1168.2 508.9 L1168.7 512.5 L1169.3 516.1 L1170.1 519.5 L1170.9 522.8 L1171.8 525.8 L1172.8 528.6 L1174.1 531.2 L1175.5 533.7 L1177.0 536.1 L1178.6 538.3 L1180.1 540.4 L1181.5 542.3 L1182.7 544.1 L1183.8 545.7 L1184.9 547.2 L1186.0 548.6 L1187.0 549.8 L1188.0 550.9 L1188.8 551.8 L1189.5 552.6 L1190.0 553.2" stroke="#a4a4a4" stroke-width="1.75"/><path d="M843.6 472.1 L852.8 469.3" stroke="#a4a4a4" stroke-width="1.75"/><rect x="901.1" y="588.2" width="11" height="11" stroke="#a4a4a4" stroke-width="1.75" transform="rotate(32 906.6 593.7)"/><rect x="910.8" y="603.0" width="11" height="11" stroke="#a4a4a4" stroke-width="1.75" transform="rotate(32 916.3 608.5)"/><rect x="923.3" y="619.6" width="11" height="11" stroke="#a4a4a4" stroke-width="1.75" transform="rotate(32 928.8 625.1)"/><rect x="937.2" y="634.1" width="11" height="11" stroke="#a4a4a4" stroke-width="1.75" transform="rotate(32 942.7 639.6)"/><rect x="951.1" y="646.6" width="11" height="11" stroke="#a4a4a4" stroke-width="1.75" transform="rotate(32 956.6 652.1)"/><path d="M236.4 440.0 L276.7 520.6" stroke="#20c2e2" stroke-width="1.9" stroke-dasharray="26 9"/><path d="M200.0 441.8 L228.6 501.7" stroke="#a4a4a4" stroke-width="1.75"/><path d="M228.6 501.7 L228.6 503.1 L228.8 504.9 L229.0 507.1 L229.2 509.6 L229.2 512.1 L229.1 514.5 L228.8 516.7 L228.2 518.6 L227.2 520.0 L225.8 521.2 L224.1 522.2 L222.3 523.0 L220.5 523.9 L218.7 524.9 L217.2 526.1 L216.1 527.6 L215.2 529.5 L214.4 531.7 L213.8 534.1 L213.3 536.6 L213.0 539.1 L212.8 541.4 L213.0 543.6 L213.4 545.5 L214.2 547.0 L215.5 548.3 L217.1 549.4 L218.8 550.4 L220.6 551.3 L222.3 552.3 L223.8 553.3 L225.0 554.4 L225.9 555.7 L226.5 557.2 L227.1 558.8 L227.5 560.3 L227.9 561.8 L228.1 563.1 L228.4 564.3 L228.6 565.1" stroke="#a4a4a4" stroke-width="1.75"/><path d="M227.7 568.7 L226.8 593.7 L223.2 620.0" stroke="#9c9c9c" stroke-width="1.75" stroke-dasharray="10 6"/><path d="M260.8 556.2 L261.4 557.7 L262.2 559.7 L263.3 562.0 L264.3 564.7 L265.4 567.4 L266.5 570.3 L267.3 573.1 L267.9 575.8 L268.3 578.4 L268.6 581.0 L268.7 583.7 L268.8 586.4 L268.7 589.1 L268.6 591.8 L268.3 594.5 L267.9 597.3 L267.3 600.2 L266.5 603.4 L265.4 606.7 L264.3 610.0 L263.3 613.1 L262.2 615.9 L261.4 618.2 L260.8 620.0" stroke="#a4a4a4" stroke-width="1.75"/><path d="M290.3 516.9 L291.0 518.6 L292.0 520.9 L293.1 523.7 L294.3 526.7 L295.7 529.9 L297.1 532.9 L298.6 535.8 L300.1 538.3 L301.6 540.5 L303.2 542.5 L304.8 544.4 L306.5 546.2 L308.3 547.9 L310.2 549.5 L312.2 551.1 L314.4 552.6 L316.8 554.1 L319.3 555.6 L322.1 557.0 L324.9 558.3 L327.7 559.6 L330.5 560.7 L333.2 561.6 L335.8 562.4 L338.2 563.0 L340.6 563.5 L342.9 563.8 L345.2 564.0 L347.4 564.1 L349.6 564.0 L351.7 563.7 L353.7 563.3 L355.8 562.6 L357.9 561.6 L360.0 560.3 L362.0 558.9 L363.8 557.5 L365.5 556.2 L366.9 555.2 L368.0 554.4" stroke="#a4a4a4" stroke-width="1.75"/><path d="M321.5 527.6 L321.2 527.2 L320.5 526.7 L319.6 526.1 L318.8 525.4 L318.2 524.7 L318.1 523.9 L318.5 523.0 L319.7 522.2 L322.0 521.2 L325.2 520.0 L329.1 518.7 L333.3 517.4 L337.7 516.1 L341.8 515.1 L345.5 514.5 L348.3 514.2 L350.4 514.4 L352.0 514.9 L353.2 515.8 L354.1 516.8 L354.9 518.0 L355.6 519.4 L356.4 520.8 L357.3 522.2 L358.4 523.7 L359.5 525.5 L360.6 527.3 L361.6 529.3 L362.6 531.2 L363.4 533.2 L364.0 534.9 L364.4 536.5 L364.5 537.9 L364.4 539.2 L364.2 540.5 L363.8 541.6 L363.2 542.7 L362.5 543.7 L361.8 544.6 L360.9 545.5 L359.9 546.3 L358.8 547.1 L357.5 547.8 L356.2 548.4 L354.7 549.0 L353.2 549.4 L351.7 549.7 L350.1 549.9 L348.4 550.0 L346.6 549.9 L344.8 549.8 L342.8 549.5 L340.9 549.1 L339.1 548.6 L337.4 548.0 L335.8 547.2 L334.4 546.2 L333.0 544.8 L331.7 543.3 L330.5 541.7 L329.3 540.1 L328.4 538.6 L327.5 537.4 L326.9 536.5" stroke="#a4a4a4" stroke-width="1.75"/><path d="M276.9 479.3 L291.2 476.6 L294.7 474.0" stroke="#a4a4a4" stroke-width="1.75"/><path d="M284.0 477.5 L289.4 486.5 L300.1 499.0" stroke="#a4a4a4" stroke-width="1.75"/><path d="M1725.3 615.3 L1727.3 616.5 L1730.0 618.1 L1733.1 620.0 L1736.6 622.1 L1740.3 624.2 L1744.2 626.3 L1747.9 628.1 L1751.5 629.6 L1754.9 630.8 L1758.4 632.0 L1761.8 633.0 L1765.4 633.9 L1768.9 634.6 L1772.6 635.1 L1776.3 635.5 L1780.1 635.6 L1784.1 635.5 L1788.4 635.2 L1792.9 634.8 L1797.4 634.2 L1801.8 633.3 L1806.0 632.3 L1810.0 631.1 L1813.5 629.6 L1816.7 627.8 L1819.6 625.7 L1822.3 623.2 L1824.8 620.6 L1827.0 618.0 L1829.1 615.3 L1830.9 612.8 L1832.5 610.6 L1833.8 608.5 L1834.8 606.4 L1835.6 604.3 L1836.1 602.3 L1836.5 600.4 L1836.8 598.8 L1837.0 597.4 L1837.3 596.3" stroke="#a4a4a4" stroke-width="1.75"/><path d="M1758.6 649.9 L1761.8 650.0 L1766.1 650.3 L1771.2 650.6 L1776.8 651.0 L1782.7 651.2 L1788.6 651.3 L1794.2 651.1 L1799.2 650.6 L1803.8 649.8 L1808.4 648.9 L1812.8 647.8 L1817.2 646.4 L1821.4 644.9 L1825.3 643.2 L1829.1 641.3 L1832.5 639.2 L1835.6 636.8 L1838.6 634.2 L1841.2 631.4 L1843.7 628.3 L1845.9 625.2 L1848.0 621.9 L1849.9 618.6 L1851.6 615.3 L1853.1 611.9 L1854.4 608.4 L1855.4 604.8 L1856.3 601.1 L1857.0 597.5 L1857.7 593.8 L1858.2 590.2 L1858.7 586.7 L1859.1 583.3 L1859.4 580.0 L1859.5 576.7 L1859.6 573.5 L1859.5 570.2 L1859.5 567.0 L1859.3 563.8 L1859.2 560.5 L1859.0 557.0 L1858.7 553.3 L1858.3 549.5 L1857.8 545.8 L1857.4 542.2 L1857.0 539.0 L1856.6 536.3 L1856.4 534.3" stroke="#a4a4a4" stroke-width="1.75"/><path d="M1892.1 527.1 L1892.5 530.5 L1892.9 535.2 L1893.5 540.8 L1894.1 546.9 L1894.8 553.1 L1895.5 558.9 L1896.2 563.9 L1896.9 567.7 L1897.6 570.2 L1898.5 571.8 L1899.4 572.7 L1900.3 573.1 L1901.1 573.4 L1901.9 573.8 L1902.5 574.6 L1902.8 576.0 L1903.0 577.8 L1903.0 579.7 L1902.9 581.7 L1902.6 584.0 L1902.3 586.5 L1901.8 589.4 L1901.2 592.6 L1900.4 596.3 L1899.4 600.6 L1898.2 605.6 L1896.8 611.0 L1895.3 616.8 L1893.8 622.6 L1892.3 628.5 L1890.9 634.0 L1889.7 639.2 L1888.6 644.0 L1887.6 648.5 L1886.5 652.8 L1885.6 657.0 L1884.7 661.3 L1884.0 665.6 L1883.5 670.1 L1883.1 674.9 L1882.9 680.0 L1882.7 685.6 L1882.6 691.3 L1882.7 697.1 L1883.0 702.8 L1883.5 708.2 L1884.3 713.3 L1885.4 717.8 L1887.0 721.7 L1889.0 725.2 L1891.3 728.4 L1893.8 731.2 L1896.5 733.9 L1899.2 736.5 L1901.7 739.0 L1904.0 741.6 L1906.2 744.3 L1908.6 747.0 L1910.9 749.7 L1913.2 752.3 L1915.3 754.7 L1917.2 756.8 L1918.8 758.6 L1920.0 760.0" stroke="#a4a4a4" stroke-width="1.75"/><path d="M1896.9 572.4 L1920.0 571.2" stroke="#a4a4a4" stroke-width="1.75"/><path d="M1904.0 584.3 L1920.0 584.3" stroke="#a4a4a4" stroke-width="1.75"/><path d="M1902.8 576.0 L1904.0 584.3" stroke="#a4a4a4" stroke-width="1.75"/><path d="M1827.8 589.1 L1846.8 587.9 L1857.6 592.7" stroke="#9c9c9c" stroke-width="1.75" stroke-dasharray="10 6"/><path d="M1857.6 592.7 L1894.5 577.2" stroke="#9c9c9c" stroke-width="1.75" stroke-dasharray="10 6"/><path d="M1543.6 587.7 L1556.1 594.9" stroke="#20c2e2" stroke-width="1.9"/><path d="M1570.4 604.7 L1611.5 631.5" stroke="#20c2e2" stroke-width="1.9"/><path d="M1556.1 594.9 L1570.4 604.7" stroke="#9c9c9c" stroke-width="1.75" stroke-dasharray="10 6"/><path d="M1611.5 631.5 L1625.8 640.4" stroke="#9c9c9c" stroke-width="1.75" stroke-dasharray="10 6"/><path d="M1545.4 668.2 L1611.5 668.2 L1624.0 678.0 L1633.0 690.5 L1631.2 703.0" stroke="#a4a4a4" stroke-width="1.75"/><path d="M1559.7 635.1 L1586.5 663.7" stroke="#9c9c9c" stroke-width="1.75" stroke-dasharray="10 6"/><path d="M380.0 635.8 L401.4 625.1" stroke="#a4a4a4" stroke-width="1.75"/><path d="M401.4 625.1 L501.5 563.2" stroke="#9c9c9c" stroke-width="1.75" stroke-dasharray="10 6"/><path d="M411.5 619.2 L420.0 614.4" stroke="#a4a4a4" stroke-width="1.75"/><path d="M432.9 607.2 L441.5 602.5" stroke="#a4a4a4" stroke-width="1.75"/><path d="M461.5 590.6 L470.1 585.8" stroke="#a4a4a4" stroke-width="1.75"/><path d="M485.3 578.6 L493.9 573.9" stroke="#a4a4a4" stroke-width="1.75"/><path d="M415.7 616.8 L480.1 740.0" stroke="#9c9c9c" stroke-width="1.75" stroke-dasharray="10 6"/><path d="M437.2 604.9 L440.9 612.0 L446.1 622.0 L452.3 633.9 L459.1 646.9 L466.0 660.0 L472.5 672.3 L478.1 682.8 L482.5 690.7 L485.6 696.0 L487.8 699.7 L489.3 702.0 L490.4 703.4 L491.2 704.0 L492.0 704.3 L493.0 704.5 L494.4 705.0 L496.1 705.6 L497.9 705.9 L499.8 705.8 L501.7 705.6 L503.6 705.1 L505.4 704.4 L507.1 703.6 L508.7 702.6 L510.2 701.4 L511.7 699.9 L513.2 698.2 L514.6 696.3 L515.9 694.4 L516.9 692.3 L517.7 690.3 L518.2 688.3 L518.6 686.8 L519.0 685.9 L519.4 685.1 L519.4 684.3 L519.0 682.9 L518.0 680.5 L516.2 676.9 L513.5 671.6 L509.3 663.8 L503.5 653.5 L496.7 641.5 L489.4 628.9 L482.1 616.3 L475.4 604.7 L469.8 595.1 L465.8 588.2" stroke="#9c9c9c" stroke-width="1.75" stroke-dasharray="10 6"/><path d="M489.6 576.3 L492.3 581.0 L496.2 587.7 L500.7 595.7 L505.7 604.3 L510.8 613.0 L515.5 621.2 L519.7 628.2 L523.0 633.5 L525.3 637.0 L526.9 639.4 L528.1 640.9 L528.9 641.7 L529.6 642.1 L530.3 642.2 L531.2 642.5 L532.5 643.0 L534.0 643.7 L535.7 644.2 L537.4 644.6 L539.2 644.9 L541.1 645.2 L542.9 645.3 L544.9 645.4 L546.8 645.4 L548.9 645.3 L551.2 645.1 L553.6 644.7 L556.0 644.3 L558.4 643.9 L560.4 643.5 L562.2 643.2 L563.5 643.0" stroke="#9c9c9c" stroke-width="1.75" stroke-dasharray="10 6"/><path d="M563.5 643.0 L564.4 644.7 L565.7 646.8 L567.2 649.5 L568.8 652.4 L570.6 655.4 L572.3 658.5 L573.9 661.6 L575.4 664.4 L576.8 667.1 L578.1 669.7 L579.5 672.2 L580.8 674.9 L582.0 677.5 L583.2 680.2 L584.2 683.0 L585.0 685.9 L585.6 688.9 L586.1 692.1 L586.3 695.3 L586.5 698.6 L586.7 701.9 L586.8 705.3 L587.0 708.7 L587.3 712.1 L587.7 715.7 L588.2 719.6 L588.7 723.7 L589.2 727.7 L589.8 731.5 L590.2 734.9 L590.6 737.8 L590.9 740.0" stroke="#a4a4a4" stroke-width="1.75"/><path d="M585.0 685.9 L620.0 681.1" stroke="#a4a4a4" stroke-width="1.75"/><path d="M401.4 625.1 L432.4 681.1 L411.0 695.4 L434.8 740.0" stroke="#a4a4a4" stroke-width="1.75"/><path d="M506.3 734.7 L507.7 731.3 L509.4 726.7 L511.4 721.1 L513.8 715.0 L516.5 708.8 L519.7 702.8 L523.5 697.4 L527.8 693.0 L533.2 689.4 L540.0 686.2 L547.5 683.4 L555.3 680.9 L563.0 678.7 L570.1 676.9 L575.9 675.3 L580.2 674.0" stroke="#9c9c9c" stroke-width="1.75" stroke-dasharray="10 6"/><path d="M516.6 740.7 L518.4 739.6 L520.8 738.1 L523.6 736.3 L526.7 734.3 L530.1 732.3 L533.5 730.2 L536.8 728.3 L539.9 726.6 L542.9 725.0 L545.9 723.5 L548.9 722.0 L552.0 720.5 L555.0 719.1 L558.1 717.9 L561.1 716.7 L564.0 715.7 L567.1 714.9 L570.3 714.2 L573.6 713.6 L576.8 713.1 L579.8 712.7 L582.6 712.4 L584.9 712.1 L586.6 711.9" stroke="#a4a4a4" stroke-width="1.75"/><path d="M506.3 734.7 L516.6 740.7" stroke="#a4a4a4" stroke-width="1.75"/><path d="M5.7 748.5 L51.3 722.9" stroke="#a4a4a4" stroke-width="1.75"/><path d="M5.7 762.8 L79.8 720.0" stroke="#9c9c9c" stroke-width="1.75" stroke-dasharray="10 6"/><path d="M5.7 825.5 L188.1 720.0" stroke="#9c9c9c" stroke-width="1.75" stroke-dasharray="10 6"/><path d="M5.7 845.4 L225.2 720.0" stroke="#9c9c9c" stroke-width="1.75" stroke-dasharray="10 6"/><path d="M8.6 879.6 L134.0 805.5 L193.8 768.5 L273.7 720.0" stroke="#9c9c9c" stroke-width="1.75" stroke-dasharray="10 6"/><path d="M5.7 919.5 L142.5 839.7 L293.6 751.4" stroke="#9c9c9c" stroke-width="1.75" stroke-dasharray="10 6"/><path d="M5.7 942.3 L128.3 868.2" stroke="#9c9c9c" stroke-width="1.75" stroke-dasharray="10 6"/><path d="M5.7 965.2 L71.3 925.2" stroke="#9c9c9c" stroke-width="1.75" stroke-dasharray="10 6"/><path d="M119.7 797.0 L136.8 816.9 L191.0 825.5 L159.6 768.5" stroke="#9c9c9c" stroke-width="1.75" stroke-dasharray="10 6"/><path d="M125.4 865.4 L134.0 879.6 L176.7 956.6 L282.2 990.8 L336.4 959.5" stroke="#9c9c9c" stroke-width="1.75" stroke-dasharray="10 6"/><path d="M134.0 879.6 L296.5 779.9" stroke="#9c9c9c" stroke-width="1.75" stroke-dasharray="10 6"/><path d="M182.4 948.1 L302.2 879.6" stroke="#9c9c9c" stroke-width="1.75" stroke-dasharray="10 6"/><path d="M322.1 876.8 L336.4 919.5 L370.6 1005.1" stroke="#9c9c9c" stroke-width="1.75" stroke-dasharray="10 6"/><path d="M307.9 896.7 L325.0 919.5 L356.3 1005.1" stroke="#9c9c9c" stroke-width="1.75" stroke-dasharray="10 6"/><path d="M268.0 720.0 L290.8 761.3 L313.6 748.5 L370.6 849.7 L336.4 869.7 L344.9 875.4 L376.3 930.9 L480.0 873.9" stroke="#a4a4a4" stroke-width="1.75"/><path d="M376.3 930.9 L390.5 925.2 L421.9 982.3 L437.6 973.7 L407.6 916.7" stroke="#a4a4a4" stroke-width="1.75"/><path d="M424.7 720.0 L456.1 774.2 L480.0 751.4" stroke="#a4a4a4" stroke-width="1.75"/><path d="M199.5 720.0 L238.0 772.7 L265.1 821.2" stroke="#20c2e2" stroke-width="1.9"/><path d="M238.0 772.7 L222.3 806.9" stroke="#20c2e2" stroke-width="1.9"/><path d="M273.7 839.7 L299.3 888.2 L320.7 919.5" stroke="#20c2e2" stroke-width="1.9"/><path d="M213.8 824.0 L196.7 866.8" stroke="#20c2e2" stroke-width="1.9"/><path d="M233.8 835.5 L210.9 875.4" stroke="#20c2e2" stroke-width="1.9"/><path d="M266.5 771.3 L242.3 818.3" stroke="#20c2e2" stroke-width="1.9"/><path d="M266.5 771.3 L306.4 802.7" stroke="#20c2e2" stroke-width="1.9"/><path d="M266.5 771.3 L285.1 757.1" stroke="#20c2e2" stroke-width="1.9"/><path d="M307.9 765.6 L322.1 799.8" stroke="#20c2e2" stroke-width="1.9"/><path d="M307.9 765.6 L312.1 754.2" stroke="#20c2e2" stroke-width="1.9"/><path d="M322.1 814.1 L362.0 845.4" stroke="#20c2e2" stroke-width="1.9"/><path d="M327.8 816.9 L340.6 854.0 L362.0 845.4" stroke="#20c2e2" stroke-width="1.9"/><path d="M340.6 854.0 L302.2 886.8" stroke="#20c2e2" stroke-width="1.9"/><path d="M258.0 854.0 L302.2 888.2" stroke="#20c2e2" stroke-width="1.9"/><path d="M273.7 881.1 L302.2 888.2" stroke="#20c2e2" stroke-width="1.9"/><path d="M302.2 886.8 L302.2 898.2" stroke="#20c2e2" stroke-width="1.9"/><path d="M330.7 936.6 L349.2 968.0 L364.9 990.8" stroke="#20c2e2" stroke-width="1.9"/><path d="M189.6 883.9 L173.9 916.7" stroke="#20c2e2" stroke-width="1.9"/><path d="M202.4 892.5 L182.4 936.6 L196.7 948.1" stroke="#20c2e2" stroke-width="1.9"/><path d="M139.7 913.8 L155.4 915.3 L173.9 916.7 L176.7 939.5 L158.2 950.9 L148.2 997.9" stroke="#20c2e2" stroke-width="1.9"/><path d="M158.2 950.9 L216.6 983.7" stroke="#20c2e2" stroke-width="1.9"/><path d="M148.2 942.3 L142.5 985.1" stroke="#20c2e2" stroke-width="1.9"/><path d="M233.8 992.2 L259.4 1005.1" stroke="#20c2e2" stroke-width="1.9"/><path d="M99.8 916.7 L139.7 940.9" stroke="#20c2e2" stroke-width="1.9"/><path d="M11.4 901.0 L42.8 882.5 L82.7 908.1" stroke="#20c2e2" stroke-width="1.9"/><path d="M5.7 859.7 L28.5 873.9" stroke="#20c2e2" stroke-width="1.9"/><path d="M14.3 811.2 L41.3 771.3" stroke="#20c2e2" stroke-width="1.9"/><path d="M49.9 754.2 L61.3 732.8 L74.1 727.1 L106.9 784.1" stroke="#20c2e2" stroke-width="1.9"/><circle cx="238.0" cy="772.7" r="3.2" stroke="#1cc4e4" stroke-width="1.5"/><circle cx="266.5" cy="771.3" r="3.2" stroke="#1cc4e4" stroke-width="1.5"/><circle cx="307.9" cy="765.6" r="3.2" stroke="#1cc4e4" stroke-width="1.5"/><circle cx="340.6" cy="854.0" r="3.2" stroke="#1cc4e4" stroke-width="1.5"/><circle cx="362.0" cy="845.4" r="3.2" stroke="#1cc4e4" stroke-width="1.5"/><circle cx="302.2" cy="888.2" r="3.2" stroke="#1cc4e4" stroke-width="1.5"/><circle cx="302.2" cy="898.2" r="3.2" stroke="#1cc4e4" stroke-width="1.5"/><circle cx="153.9" cy="915.3" r="3.2" stroke="#1cc4e4" stroke-width="1.5"/><circle cx="173.9" cy="916.7" r="3.2" stroke="#1cc4e4" stroke-width="1.5"/><circle cx="176.7" cy="939.5" r="3.2" stroke="#1cc4e4" stroke-width="1.5"/><circle cx="148.2" cy="942.3" r="3.2" stroke="#1cc4e4" stroke-width="1.5"/><circle cx="158.2" cy="950.9" r="3.2" stroke="#1cc4e4" stroke-width="1.5"/><circle cx="349.2" cy="968.0" r="3.2" stroke="#1cc4e4" stroke-width="1.5"/><circle cx="202.4" cy="721.4" r="3.2" stroke="#1cc4e4" stroke-width="1.5"/><rect x="59.2" y="729.3" width="7" height="7" stroke="#1cc4e4" stroke-width="1.5" transform="rotate(-25 62.7 732.8)"/><rect x="70.6" y="723.6" width="7" height="7" stroke="#1cc4e4" stroke-width="1.5" transform="rotate(-25 74.1 727.1)"/><rect x="103.4" y="780.6" width="7" height="7" stroke="#1cc4e4" stroke-width="1.5" transform="rotate(-25 106.9 784.1)"/><path d="M480.0 734.3 L485.7 742.8 L557.0 811.2 L531.3 845.4 L480.0 873.9" stroke="#a4a4a4" stroke-width="1.75"/><path d="M588.3 720.0 L599.7 799.8 L609.7 808.4 L826.4 771.3 L819.2 720.0" stroke="#a4a4a4" stroke-width="1.75"/><path d="M826.4 771.3 L857.7 1007.1" stroke="#a4a4a4" stroke-width="1.75"/><path d="M836.3 725.7 L839.2 879.6 L856.3 1007.1" stroke="#9c9c9c" stroke-width="1.75" stroke-dasharray="10 6"/><path d="M847.7 725.7 L850.6 805.5 L873.4 1007.1" stroke="#9c9c9c" stroke-width="1.75" stroke-dasharray="10 6"/><path d="M874.8 720.0 L884.8 771.3" stroke="#a4a4a4" stroke-width="1.75"/><path d="M924.7 725.7 L930.4 762.8" stroke="#9c9c9c" stroke-width="1.75" stroke-dasharray="10 6"/><path d="M924.7 728.6 L901.9 731.4 L887.6 742.8 L884.8 765.6" stroke="#9c9c9c" stroke-width="1.75" stroke-dasharray="10 6"/><path d="M927.5 768.5 L960.0 762.8" stroke="#a4a4a4" stroke-width="1.75"/><path d="M927.5 768.5 L939.0 816.9 L953.2 882.5 L927.5 888.2 L926.1 913.8 L941.8 1007.1" stroke="#a4a4a4" stroke-width="1.75"/><path d="M887.6 771.3 L907.6 891.0 L924.7 1007.1" stroke="#9c9c9c" stroke-width="1.75" stroke-dasharray="10 6"/><path d="M837.8 879.6 L765.1 888.2 L705.2 902.4 L679.5 936.6 L662.4 965.2 L665.3 1007.1" stroke="#9c9c9c" stroke-width="1.75" stroke-dasharray="10 6"/><path d="M839.2 889.6 L765.1 899.6 L713.8 911.0 L699.5 922.4 L679.5 950.9 L671.0 970.9 L676.7 1007.1" stroke="#9c9c9c" stroke-width="1.75" stroke-dasharray="10 6"/><path d="M748.0 905.3 L753.7 936.6 L776.5 945.2 L805.0 962.3 L847.7 953.8" stroke="#9c9c9c" stroke-width="1.75" stroke-dasharray="10 6"/><path d="M736.6 906.7 L742.3 948.1 L713.8 959.5 L702.3 953.8 L679.5 956.6 L699.5 970.9 L705.2 1007.1" stroke="#9c9c9c" stroke-width="1.75" stroke-dasharray="10 6"/><path d="M628.2 805.5 L685.2 925.2" stroke="#20c2e2" stroke-width="1.9" stroke-dasharray="26 9"/><circle cx="659.0" cy="879.6" r="3.2" stroke="#1cc4e4" stroke-width="1.5"/><path d="M690.9 942.3 L718.0 986.5 L728.0 1007.1" stroke="#20c2e2" stroke-width="1.9"/><path d="M718.0 986.5 L762.2 1000.8 L790.7 1000.8" stroke="#20c2e2" stroke-width="1.9"/><path d="M762.2 1000.8 L766.5 966.6" stroke="#20c2e2" stroke-width="1.9"/><circle cx="718.0" cy="986.5" r="3.2" stroke="#1cc4e4" stroke-width="1.5"/><rect x="763.0" y="963.1" width="7" height="7" stroke="#1cc4e4" stroke-width="1.5" transform="rotate(-25 766.5 966.6)"/><rect x="787.2" y="997.3" width="7" height="7" stroke="#1cc4e4" stroke-width="1.5" transform="rotate(-25 790.7 1000.8)"/><circle cx="762.2" cy="1000.8" r="3.2" stroke="#1cc4e4" stroke-width="1.5"/><path d="M874.8 720.0 L896.2 828.3 L907.6 891.0" stroke="#20c2e2" stroke-width="1.9"/><path d="M847.7 787.0 L886.2 779.9" stroke="#20c2e2" stroke-width="1.9"/><circle cx="847.7" cy="787.0" r="3.2" stroke="#1cc4e4" stroke-width="1.5"/><rect x="882.7" y="776.4" width="7" height="7" stroke="#1cc4e4" stroke-width="1.5" transform="rotate(-25 886.2 779.9)"/><path d="M904.7 834.0 L936.1 829.7 L951.8 882.5" stroke="#20c2e2" stroke-width="1.9"/><circle cx="936.1" cy="829.7" r="3.2" stroke="#1cc4e4" stroke-width="1.5"/><circle cx="951.8" cy="882.5" r="3.2" stroke="#1cc4e4" stroke-width="1.5"/><path d="M911.9 911.0 L930.4 1007.1" stroke="#20c2e2" stroke-width="1.9"/><path d="M874.8 965.2 L920.4 956.6" stroke="#20c2e2" stroke-width="1.9"/><rect x="871.3" y="961.7" width="7" height="7" stroke="#1cc4e4" stroke-width="1.5" transform="rotate(-25 874.8 965.2)"/><circle cx="920.4" cy="956.6" r="3.2" stroke="#1cc4e4" stroke-width="1.5"/><circle cx="836.3" cy="918.1" r="3.2" stroke="#1cc4e4" stroke-width="1.5"/><path d="M927.6 769.3 L1187.3 722.2" stroke="#a4a4a4" stroke-width="1.75"/><path d="M1059.1 848.8 L1166.2 827.7 L1189.0 939.7" stroke="#a4a4a4" stroke-width="1.75"/><path d="M1059.1 848.8 L1091.6 1006.9" stroke="#a4a4a4" stroke-width="1.75"/><path d="M1545.7 492.3 L1556.8 490.9 L1561.0 499.3" stroke="#a4a4a4" stroke-width="1.75"/><path d="M1545.7 500.6 L1723.6 614.7 L1757.0 642.5 L1829.3 700.0" stroke="#9c9c9c" stroke-width="1.75" stroke-dasharray="10 6"/><path d="M1545.7 511.8 L1634.7 564.6" stroke="#a4a4a4" stroke-width="1.75"/><path d="M1545.7 517.3 L1618.0 561.8 L1718.1 620.2" stroke="#9c9c9c" stroke-width="1.75" stroke-dasharray="10 6"/><path d="M1701.4 471.4 L1715.3 461.7 L1745.9 484.0 L1809.9 506.2 L1818.2 511.8 L1851.6 503.4" stroke="#9c9c9c" stroke-width="1.75" stroke-dasharray="10 6"/><path d="M1718.1 485.4 L1745.9 503.4 L1807.1 522.9 L1848.8 525.7" stroke="#9c9c9c" stroke-width="1.75" stroke-dasharray="10 6"/><path d="M1807.1 420.0 L1818.2 509.0 L1826.5 586.9 L1851.6 586.9" stroke="#9c9c9c" stroke-width="1.75" stroke-dasharray="10 6"/><path d="M1837.7 420.0 L1851.6 503.4 L1857.1 586.9 L1834.9 598.0" stroke="#9c9c9c" stroke-width="1.75" stroke-dasharray="10 6"/><path d="M1544.3 614.7 L1551.2 631.3 L1545.7 700.0" stroke="#a4a4a4" stroke-width="1.75"/><path d="M1545.7 667.5 L1612.4 667.5 L1631.9 684.2 L1634.7 700.0" stroke="#a4a4a4" stroke-width="1.75"/><path d="M1737.6 420.0 L1743.1 424.2 L1773.7 420.0" stroke="#a4a4a4" stroke-width="1.75"/><path d="M1865.5 420.0 L1869.6 428.3 L1865.5 432.5" stroke="#20c2e2" stroke-width="1.9"/><path d="M1627.4 640.0 L1693.0 683.7" stroke="#20c2e2" stroke-width="1.9" stroke-dasharray="26 9"/><path d="M1707.6 694.6 L1747.7 723.8" stroke="#20c2e2" stroke-width="1.9"/><path d="M1758.6 731.1 L1798.7 758.4" stroke="#20c2e2" stroke-width="1.9"/><path d="M1875.2 807.6 L1918.9 836.7" stroke="#20c2e2" stroke-width="1.9"/><rect x="1669.5" y="667.5" width="7" height="7" stroke="#1cc4e4" stroke-width="1.5" transform="rotate(-25 1673.0 671.0)"/><path d="M1634.7 709.2 L1714.9 760.2" stroke="#9c9c9c" stroke-width="1.75" stroke-dasharray="10 6"/><path d="M1744.0 640.0 L1920.0 756.6" stroke="#9c9c9c" stroke-width="1.75" stroke-dasharray="10 6"/><path d="M1856.9 760.2 L1871.5 743.8 L1898.8 709.2 L1920.0 705.6" stroke="#20c2e2" stroke-width="1.9"/><rect x="1868.0" y="740.3" width="7" height="7" stroke="#1cc4e4" stroke-width="1.5" transform="rotate(-25 1871.5 743.8)"/><circle cx="1898.8" cy="709.2" r="3.2" stroke="#1cc4e4" stroke-width="1.5"/><path d="M1547.3 640.0 L1561.9 760.2 L1572.8 840.4 L1547.3 844.0" stroke="#a4a4a4" stroke-width="1.75"/><path d="M1618.3 760.2 L1638.4 731.1 L1718.5 756.6" stroke="#a4a4a4" stroke-width="1.75"/><path d="M1638.4 838.5 L1667.5 825.8 L1693.0 829.4 L1711.2 840.4 L1744.0 858.6 L1795.0 814.9" stroke="#a4a4a4" stroke-width="1.75"/><path d="M1645.6 844.0 L1649.3 854.9 L1683.9 887.7 L1685.7 905.9 L1707.6 931.4 L1703.9 942.4 L1711.2 956.9 L1733.1 967.9 L1749.5 986.1 L1769.5 1006.8" stroke="#a4a4a4" stroke-width="1.75"/><path d="M1720.3 880.4 L1729.4 867.7 L1744.0 858.6" stroke="#a4a4a4" stroke-width="1.75"/><path d="M1720.3 880.4 L1751.3 920.5 L1835.1 949.7 L1856.9 916.9 L1920.0 873.2" stroke="#a4a4a4" stroke-width="1.75"/><path d="M1751.3 911.4 L1791.4 869.5 L1805.9 880.4 L1798.7 895.0 L1813.2 909.6 L1827.8 895.0 L1856.9 916.9" stroke="#a4a4a4" stroke-width="1.75"/><path d="M1835.1 949.7 L1871.5 971.5 L1920.0 935.1" stroke="#a4a4a4" stroke-width="1.75"/><path d="M1846.0 814.9 L1920.0 858.6" stroke="#9c9c9c" stroke-width="1.75" stroke-dasharray="10 6"/><path d="M1831.4 814.9 L1920.0 880.4" stroke="#a4a4a4" stroke-width="1.75"/><path d="M1547.3 891.4 L1627.4 975.2" stroke="#a4a4a4" stroke-width="1.75"/><path d="M1547.3 924.2 L1565.5 931.4 L1572.8 942.4 L1612.9 1006.8" stroke="#a4a4a4" stroke-width="1.75"/><path d="M1674.8 927.8 L1729.4 1006.8" stroke="#a4a4a4" stroke-width="1.75"/><path d="M1749.5 964.2 L1762.2 953.3 L1776.8 964.2 L1764.0 977.0 L1749.5 964.2" stroke="#a4a4a4" stroke-width="1.75"/><path d="M1776.8 986.1 L1791.4 973.3 L1805.9 984.3 L1791.4 998.8 L1776.8 986.1" stroke="#a4a4a4" stroke-width="1.75"/><ellipse cx="1082.4" cy="548.5" rx="10.6" ry="9.7" transform="rotate(0 1082.4 548.5)" stroke="#a4a4a4" stroke-width="1.75"/><ellipse cx="1057.3" cy="590.2" rx="12.5" ry="11.7" transform="rotate(0 1057.3 590.2)" stroke="#a4a4a4" stroke-width="1.75"/><ellipse cx="1043.4" cy="622.1" rx="10.0" ry="10.0" transform="rotate(0 1043.4 622.1)" stroke="#a4a4a4" stroke-width="1.75"/><ellipse cx="1147.7" cy="587.4" rx="11.1" ry="10.6" transform="rotate(0 1147.7 587.4)" stroke="#a4a4a4" stroke-width="1.75"/><ellipse cx="1131.0" cy="577.7" rx="43.1" ry="55.6" transform="rotate(25 1131.0 577.7)" stroke="#a4a4a4" stroke-width="1.75"/></g>
<g clip-path="url(#cvclip)"><path d="M6.0 800.5 L16.1 794.7 L28.6 787.5 L43.3 779.0 L59.8 769.4 L77.9 759.0 L97.3 747.9 L117.5 736.2 L138.4 724.2 L159.6 712.1 L180.8 700.0 L203.5 687.1 L228.8 672.8 L255.9 657.5 L284.0 641.6 L312.2 625.7 L339.9 610.0 L366.2 595.2 L390.2 581.7 L411.2 569.8 L428.3 560.0 L441.2 552.6 L450.3 547.3 L456.5 543.6 L460.5 541.1 L463.1 539.4 L464.9 538.2 L466.8 536.9 L469.4 535.2 L473.6 532.7 L480.0 529.0 L488.4 524.2 L497.9 518.7 L508.3 512.7 L519.2 506.4 L530.6 499.9 L542.1 493.5 L553.4 487.1 L564.5 481.1 L575.0 475.4 L584.8 470.4 L593.9 465.9 L602.6 461.7 L611.0 457.9 L619.1 454.3 L627.0 450.9 L634.8 447.6 L642.5 444.5 L650.2 441.5 L657.9 438.4 L665.7 435.4 L673.5 432.4 L681.3 429.5 L689.0 426.6 L696.6 423.9 L704.3 421.2 L711.8 418.6 L719.4 416.2 L727.0 413.7 L734.5 411.4 L742.1 409.2 L749.7 407.1 L757.3 405.0 L764.9 403.1 L772.5 401.3 L780.1 399.5 L787.7 397.9 L795.2 396.2 L802.6 394.7 L810.0 393.1 L817.3 391.6 L824.4 390.1 L831.4 388.7 L838.2 387.3 L845.0 386.0 L851.8 384.7 L858.5 383.5 L865.4 382.3 L872.4 381.2 L879.5 380.1 L886.9 379.0 L894.6 378.0 L902.4 376.9 L910.5 375.9 L918.7 374.9 L927.0 374.0 L935.3 373.2 L943.6 372.4 L951.7 371.7 L959.7 371.2 L967.5 370.7 L975.0 370.4 L982.3 370.1 L989.5 370.0 L996.5 370.0 L1003.5 370.0 L1010.5 370.1 L1017.6 370.3 L1024.8 370.6 L1032.2 370.9 L1039.8 371.3 L1047.8 371.8 L1056.0 372.3 L1064.5 372.9 L1073.2 373.6 L1081.8 374.4 L1090.5 375.2 L1099.1 376.1 L1107.4 377.0 L1115.5 378.0 L1123.2 379.0 L1130.5 380.0 L1137.4 380.9 L1144.0 381.9 L1150.4 382.8 L1156.7 383.9 L1163.0 385.0 L1169.4 386.4 L1175.9 387.9 L1182.8 389.6 L1190.0 391.6 L1197.3 393.8 L1204.6 396.0 L1211.8 398.3 L1219.1 400.7 L1226.7 403.4 L1234.6 406.4 L1243.0 409.6 L1251.9 413.3 L1261.5 417.4 L1272.0 422.0 L1283.4 427.2 L1295.7 433.0 L1308.8 439.4 L1322.5 446.1 L1336.6 453.1 L1351.0 460.3 L1365.5 467.6 L1379.9 474.9 L1394.1 482.1 L1408.0 489.0 L1421.2 495.5 L1433.9 501.5 L1446.3 507.2 L1458.6 512.8 L1471.0 518.6 L1483.9 524.8 L1497.4 531.6 L1511.8 539.2 L1527.3 547.8 L1544.3 557.7 L1563.1 569.1 L1583.7 582.1 L1605.7 596.2 L1628.6 611.2 L1652.1 626.7 L1675.7 642.4 L1699.0 657.9 L1721.5 672.9 L1742.9 687.0 L1762.6 700.0 L1781.5 712.4 L1800.5 724.8 L1819.3 737.0 L1837.5 749.0 L1854.9 760.4 L1871.3 771.1 L1886.3 780.9 L1899.6 789.6 L1910.9 797.0 L1920.0 803.0" fill="none" stroke="#fff" stroke-width="3.3" stroke-linejoin="round"/><path d="M114.4 739 L79.5 678.3" stroke="#ee2222" stroke-width="2" stroke-dasharray="5 3" fill="none"/><text x="0" y="0" transform="translate(80.2 669.9) rotate(-119.9)" font-size="13" fill="none" stroke="#f03030" stroke-width="0.75" textLength="68" lengthAdjust="spacingAndGlyphs" font-family="Liberation Sans, sans-serif">0+100.00</text><path d="M248 660 L213.6 599.1" stroke="#ee2222" stroke-width="2" stroke-dasharray="5 3" fill="none"/><text x="0" y="0" transform="translate(214.8 591.5) rotate(-119.5)" font-size="13" fill="none" stroke="#f03030" stroke-width="0.75" textLength="68" lengthAdjust="spacingAndGlyphs" font-family="Liberation Sans, sans-serif">0+075.00</text><path d="M386.5 583 L352.1 522.1" stroke="#ee2222" stroke-width="2" stroke-dasharray="5 3" fill="none"/><text x="0" y="0" transform="translate(353.8 515.3) rotate(-119.5)" font-size="13" fill="none" stroke="#f03030" stroke-width="0.75" textLength="68" lengthAdjust="spacingAndGlyphs" font-family="Liberation Sans, sans-serif">0+050.00</text><path d="M521.5 505 L486.8 444.2" stroke="#ee2222" stroke-width="2" stroke-dasharray="5 3" fill="none"/><text x="0" y="0" transform="translate(489.0 438.3) rotate(-119.7)" font-size="13" fill="none" stroke="#f03030" stroke-width="0.75" textLength="68" lengthAdjust="spacingAndGlyphs" font-family="Liberation Sans, sans-serif">0+025.00</text><path d="M663.5 437 L638.1 371.8" stroke="#ee2222" stroke-width="2" stroke-dasharray="5 3" fill="none"/><text x="0" y="0" transform="translate(643.7 372.8) rotate(-111.3)" font-size="13" fill="none" stroke="#f03030" stroke-width="0.75" textLength="68" lengthAdjust="spacingAndGlyphs" font-family="Liberation Sans, sans-serif">0+000.00</text><path d="M814 392.5 L799.7 324.0" stroke="#ee2222" stroke-width="2" stroke-dasharray="5 3" fill="none"/><text x="0" y="0" transform="translate(805.2 326.9) rotate(-101.8)" font-size="13" fill="none" stroke="#f03030" stroke-width="0.75" textLength="68" lengthAdjust="spacingAndGlyphs" font-family="Liberation Sans, sans-serif">0+025.00</text><path d="M968 371 L964.9 301.1" stroke="#ee2222" stroke-width="2" stroke-dasharray="5 3" fill="none"/><text x="0" y="0" transform="translate(969.9 304.9) rotate(-92.5)" font-size="13" fill="none" stroke="#f03030" stroke-width="0.75" textLength="68" lengthAdjust="spacingAndGlyphs" font-family="Liberation Sans, sans-serif">0+050.00</text><path d="M1126 379 L1135.3 309.6" stroke="#ee2222" stroke-width="2" stroke-dasharray="5 3" fill="none"/><text x="0" y="0" transform="translate(1139.6 314.2) rotate(-82.3)" font-size="13" fill="none" stroke="#f03030" stroke-width="0.75" textLength="68" lengthAdjust="spacingAndGlyphs" font-family="Liberation Sans, sans-serif">0+075.00</text><path d="M1270 424 L1298.2 359.9" stroke="#ee2222" stroke-width="2" stroke-dasharray="5 3" fill="none"/><text x="0" y="0" transform="translate(1301.0 365.5) rotate(-66.2)" font-size="13" fill="none" stroke="#f03030" stroke-width="0.75" textLength="68" lengthAdjust="spacingAndGlyphs" font-family="Liberation Sans, sans-serif">0+100.00</text><path d="M1408 489 L1439.3 426.4" stroke="#ee2222" stroke-width="2" stroke-dasharray="5 3" fill="none"/><text x="0" y="0" transform="translate(1441.8 432.1) rotate(-63.4)" font-size="13" fill="none" stroke="#f03030" stroke-width="0.75" textLength="68" lengthAdjust="spacingAndGlyphs" font-family="Liberation Sans, sans-serif">0+125.00</text><path d="M1554 562 L1590.4 502.2" stroke="#ee2222" stroke-width="2" stroke-dasharray="5 3" fill="none"/><text x="0" y="0" transform="translate(1592.4 508.1) rotate(-58.7)" font-size="13" fill="none" stroke="#f03030" stroke-width="0.75" textLength="68" lengthAdjust="spacingAndGlyphs" font-family="Liberation Sans, sans-serif">0+150.00</text><path d="M1685 649 L1723.8 590.7" stroke="#ee2222" stroke-width="2" stroke-dasharray="5 3" fill="none"/><text x="0" y="0" transform="translate(1725.6 596.7) rotate(-56.3)" font-size="13" fill="none" stroke="#f03030" stroke-width="0.75" textLength="68" lengthAdjust="spacingAndGlyphs" font-family="Liberation Sans, sans-serif">0+175.00</text><path d="M1816 735 L1854.3 676.4" stroke="#ee2222" stroke-width="2" stroke-dasharray="5 3" fill="none"/><text x="0" y="0" transform="translate(1856.1 682.4) rotate(-56.8)" font-size="13" fill="none" stroke="#f03030" stroke-width="0.75" textLength="68" lengthAdjust="spacingAndGlyphs" font-family="Liberation Sans, sans-serif">0+200.00</text><path d="M747.5 275.4 V400.5 M685.8 338 H809.5" stroke="#e8e8e8" stroke-width="1.5"/><path d="M747.5 310 V359 M731.5 338 H798" stroke="#cfcf3a" stroke-width="1.5"/><rect x="743.5" y="334" width="8" height="8" fill="#000" stroke="#dede3a" stroke-width="1.8"/><path d="M768 341 L768 357 L771.5 353.5 L774.5 360.5 L777 359.5 L774 352.5 L779 352.5 Z" fill="#fff" stroke="#222" stroke-width="0.8"/><rect x="69.5" y="190.5" width="81" height="29.5" fill="#5a5a5a"/><g fill="#8a8a8a"><rect x="73.0" y="194.0" width="1.2" height="1.2"/><rect x="73.0" y="197.0" width="1.2" height="1.2"/><rect x="73.0" y="200.0" width="1.2" height="1.2"/><rect x="73.0" y="203.0" width="1.2" height="1.2"/><rect x="73.0" y="206.0" width="1.2" height="1.2"/><rect x="73.0" y="209.0" width="1.2" height="1.2"/><rect x="73.0" y="212.0" width="1.2" height="1.2"/><rect x="73.0" y="215.0" width="1.2" height="1.2"/><rect x="75.4" y="194.0" width="1.2" height="1.2"/><rect x="75.4" y="197.0" width="1.2" height="1.2"/><rect x="75.4" y="200.0" width="1.2" height="1.2"/><rect x="75.4" y="203.0" width="1.2" height="1.2"/><rect x="75.4" y="206.0" width="1.2" height="1.2"/><rect x="75.4" y="209.0" width="1.2" height="1.2"/><rect x="75.4" y="212.0" width="1.2" height="1.2"/><rect x="75.4" y="215.0" width="1.2" height="1.2"/></g><rect x="84.8" y="194.8" width="21" height="21" fill="#fff"/><path d="M88 199 H97 C104 199 104 211 97 211 H90" fill="none" stroke="#555" stroke-width="1.3"/><ellipse cx="89" cy="199" rx="1.4" ry="3.2" fill="#d75a36" transform="rotate(0 89 199)"/><ellipse cx="97" cy="199" rx="1.4" ry="3.2" fill="#d75a36" transform="rotate(30 97 199)"/><ellipse cx="91" cy="211" rx="1.4" ry="3.2" fill="#d75a36" transform="rotate(0 91 211)"/><ellipse cx="100" cy="210" rx="1.4" ry="3.2" fill="#d75a36" transform="rotate(-30 100 210)"/><rect x="114" y="194.8" width="21.7" height="21" fill="#fff"/><path d="M115.5 197 L119 198 L122.5 210 H133" fill="none" stroke="#1818e0" stroke-width="1.6"/><path d="M119 201.5 H135 L132.5 208 H122" fill="none" stroke="#1818e0" stroke-width="1.5"/><path d="M127 198.5 V205.5 M124.5 203 L127 206 L129.5 203" fill="none" stroke="#1818e0" stroke-width="1.4"/><circle cx="123.5" cy="213.5" r="1.5" fill="#1818e0"/><circle cx="130" cy="213.5" r="1.5" fill="#1818e0"/><path d="M142.5 196.5 L147 201 M147 196.5 L142.5 201" stroke="#d0d0d0" stroke-width="1.3"/><rect x="1839.7" y="185.8" width="13.2" height="4.4" fill="#f0f0f0"/><rect x="1868" y="178" width="11" height="10.5" fill="#bdbdbd"/><rect x="1865.6" y="180.6" width="10.8" height="10.8" fill="#f0f0f0"/><rect x="1868.6" y="183.6" width="4.8" height="4.8" fill="#000"/><path d="M1892 179.5 L1902.8 190 M1902.8 179.5 L1892 190" stroke="#f4f4f4" stroke-width="2.6"/><path d="M29 919.7 V983.5 H92.7" fill="none" stroke="#e0e0e0" stroke-width="1.6"/><rect x="23.5" y="976.5" width="12.5" height="13" fill="none" stroke="#e0e0e0" stroke-width="1.5"/><path d="M31 896 L39.5 904.5 L48 896 M39.5 904.5 V913.4" fill="none" stroke="#e0e0e0" stroke-width="1.4"/><path d="M99.6 964.5 L116.6 982 M116.6 964.5 L99.6 982" stroke="#e0e0e0" stroke-width="1.4"/></g>
<defs><linearGradient id="cmbg" x1="0" y1="0" x2="0" y2="1"><stop offset="0" stop-color="#e8e8e8"/><stop offset="1" stop-color="#dedede"/></linearGradient><linearGradient id="arrg" x1="0" y1="0" x2="0" y2="1"><stop offset="0" stop-color="#ff6a50"/><stop offset="0.35" stop-color="#ff2a12"/><stop offset="1" stop-color="#f01808"/></linearGradient></defs><rect x="1189" y="363" width="355" height="639" rx="3" fill="#474747"/><rect x="1191" y="365" width="25" height="635" fill="#585858"/><rect x="1220" y="369" width="317" height="626" fill="#f0f0f0"/><path d="M1199 372 L1208 381 M1208 372 L1199 381" stroke="#d8d8d8" stroke-width="2.2"/><path d="M1198.5 394.5 L1201.5 397 V404.5 L1198.5 407 Z M1209.5 396 L1203.5 401 L1209.5 406 Z" fill="#cfcfcf"/><g stroke="#d6d6d6" stroke-width="2"><path d="M1203.5 418 V432 M1196.5 425 H1210.5 M1198.5 420 L1208.5 430 M1208.5 420 L1198.5 430"/></g><circle cx="1203.5" cy="425" r="2.5" fill="#585858"/><text x="0" y="0" font-size="14" fill="#c9c9c9" font-family="Liberation Sans, sans-serif" transform="translate(1208.3 963.5) rotate(-90)" textLength="155">POLYLINE STATIONING</text><rect x="1194" y="978" width="20" height="21" fill="#f4f8fc"/><path d="M1197 997 L1202.5 981 L1205.5 981 L1211 997 L1207.5 997 L1204 986 L1200.5 997 Z" fill="#1b6fb8"/><path d="M1201.5 992 H1206.5" stroke="#1b6fb8" stroke-width="1.5"/><rect x="1231" y="376" width="62" height="33" fill="#fbfbfb" stroke="#c9c9c9" stroke-width="2.2"/><g fill="none" stroke="#333" stroke-width="1.3"><path d="M1245 386 L1250 398 L1251.5 393.5 L1256 396.5 L1257.5 395 L1253 392 L1257 390.5 Z" fill="#fff"/><path d="M1242.5 383 l1.5 1.5 M1245 381.5 v2 M1247.5 383 l-1.2 1.2 M1241.5 386 h2 M1242.5 390 l1.5 -1.2"/><path d="M1263 385.5 C1276 383 1278 401 1266 401 L1249 401" stroke="#555"/></g><circle cx="1249" cy="401" r="1.6" fill="#666"/><circle cx="1265" cy="401" r="1.6" fill="#666"/><circle cx="1265" cy="386" r="1.8" fill="#666"/><text x="1307.6" y="402.3" font-size="14.3" fill="#1a1a1a" stroke="#1a1a1a" stroke-width="0.3" font-family="Liberation Sans, sans-serif">Selected</text><rect x="1494" y="378" width="33" height="33" fill="#fbfbfb" stroke="#c9c9c9" stroke-width="2.2"/><rect x="1499.5" y="384.5" width="17" height="15" fill="#fff" stroke="#555" stroke-width="1.3"/><circle cx="1514.5" cy="397.5" r="4.5" fill="#f4f4f4" stroke="#555" stroke-width="1.3"/><path d="M1517.5 400.5 L1522 405" stroke="#222" stroke-width="2.2"/><rect x="1228.5" y="421.5" width="300" height="137" fill="none" stroke="#7a7a7a" stroke-width="1.6"/><text x="1234" y="459" font-size="33" fill="#111" font-family="Liberation Serif, serif" textLength="38" lengthAdjust="spacingAndGlyphs">Aa</text><rect x="1281.5" y="433.5" width="184" height="26" fill="url(#cmbg)" stroke="#b9b9b9" stroke-width="1.2"/><text x="1287.5" y="452.3" font-size="13.6" fill="#141414" stroke="#141414" stroke-width="0.3" font-family="Liberation Sans, sans-serif">1.5 style</text><path d="M1447.5 444.5 L1453 450.0 L1458.5 444.5" fill="none" stroke="#3a3a3a" stroke-width="1.4"/><rect x="1485" y="435" width="33" height="26" fill="#e2e2e2" stroke="#c9c9c9" stroke-width="2.2"/><g fill="none" stroke="#222" stroke-width="2.2"><path d="M1492 446 C1493 437 1509 437 1511 444"/><path d="M1511 450 C1509 458 1493 458 1491 452"/></g><path d="M1509 442 L1513 445 L1511 440 Z M1493 454 L1489 451 L1491 456 Z" fill="#222"/><text x="1235" y="505" font-size="36" font-weight="bold" fill="#111" textLength="22" lengthAdjust="spacingAndGlyphs" font-family="Liberation Sans, sans-serif">A</text><path d="M1266 481 V502" stroke="#111" stroke-width="2.8"/><path d="M1261 486 L1266 477 L1271 486 Z M1261 497 L1266 506 L1271 497 Z" fill="#111"/><rect x="1281.5" y="477.5" width="59" height="24" fill="#fff" stroke="#8a8a8a" stroke-width="1.2"/><text x="1311" y="494.4" font-size="14.5" fill="#141414" stroke="#141414" stroke-width="0.3" text-anchor="middle" font-family="Liberation Sans, sans-serif">1.5</text><circle cx="1253.5" cy="534.5" r="17" fill="none" stroke="#1a1a1a" stroke-width="2"/><path d="M1240 535 H1267 M1245 529 L1239.5 535 L1245 541 M1262 529 L1267.5 535 L1262 541" fill="none" stroke="#1a1a1a" stroke-width="1.8"/><text x="1253.5" y="529" font-size="12" font-weight="bold" fill="#e8261e" text-anchor="middle" font-family="Liberation Sans, sans-serif">A</text><text x="1253.5" y="551" font-size="12" font-weight="bold" fill="#e8261e" text-anchor="middle" font-family="Liberation Sans, sans-serif">A</text><rect x="1281.5" y="521.5" width="238" height="28" fill="url(#cmbg)" stroke="#b9b9b9" stroke-width="1.2"/><text x="1286.7" y="541.4" font-size="15.4" fill="#141414" stroke="#141414" stroke-width="0.3" font-family="Liberation Sans, sans-serif">Left perpendicular</text><path d="M1501.5 533.5 L1507 539.0 L1512.5 533.5" fill="none" stroke="#3a3a3a" stroke-width="1.4"/><rect x="1228.5" y="570.5" width="300" height="47" fill="none" stroke="#7a7a7a" stroke-width="1.6"/><path d="M1240 605 H1267 M1248 583 V605 M1245 583 H1251" stroke="#777" stroke-width="1.3" fill="none"/><path d="M1264 585 V605" stroke="#1420d0" stroke-width="2.6"/><path d="M1241 599.60 Q1244.70 605 1241 610.40 Q1237.30 605 1241 599.60Z" fill="#b34f38" stroke="#e8906a" stroke-width="0.8" stroke-opacity="0.5" transform="rotate(0 1241 605)"/><path d="M1264 599.60 Q1267.70 605 1264 610.40 Q1260.30 605 1264 599.60Z" fill="#b34f38" stroke="#e8906a" stroke-width="0.8" stroke-opacity="0.5" transform="rotate(0 1264 605)"/><rect x="1276.5" y="577.5" width="48" height="25" fill="#fff" stroke="#8a8a8a" stroke-width="1.2"/><text x="1301.5" y="595.1" font-size="14.5" fill="#141414" stroke="#141414" stroke-width="0.3" text-anchor="middle" font-family="Liberation Sans, sans-serif">10</text><path d="M1333 592 H1358" stroke="#888" stroke-width="1.3"/><path d="M1357 594 C1365 597 1366 607 1355 606 L1347 606" fill="none" stroke="#999" stroke-width="1.5"/><path d="M1338 586.60 Q1341.70 592 1338 597.40 Q1334.30 592 1338 586.60Z" fill="#b34f38" stroke="#e8906a" stroke-width="0.8" stroke-opacity="0.5" transform="rotate(0 1338 592)"/><path d="M1353 586.60 Q1356.70 592 1353 597.40 Q1349.30 592 1353 586.60Z" fill="#b34f38" stroke="#e8906a" stroke-width="0.8" stroke-opacity="0.5" transform="rotate(0 1353 592)"/><path d="M1361 582 L1367.5 582.0 M1361 582 L1365.6 586.6 M1361 582 L1361.0 588.5 M1361 582 L1356.4 586.6 M1361 582 L1354.5 582.0 M1361 582 L1356.4 577.4 M1361 582 L1361.0 575.5 M1361 582 L1365.6 577.4 " stroke="#e86a10" stroke-width="2.2"/><circle cx="1361" cy="582" r="4.2" fill="#f08a20"/><circle cx="1361" cy="582" r="2" fill="#ffd040"/><rect x="1378.5" y="579.5" width="137" height="28" fill="url(#cmbg)" stroke="#b9b9b9" stroke-width="1.2"/><text x="1383.6" y="598.9" font-size="14.7" fill="#141414" stroke="#141414" stroke-width="0.3" font-family="Liberation Sans, sans-serif">One side</text><path d="M1497.5 591.5 L1503 597.0 L1508.5 591.5" fill="none" stroke="#3a3a3a" stroke-width="1.4"/><rect x="1228.5" y="628.5" width="300" height="125" fill="none" stroke="#7a7a7a" stroke-width="1.6"/><rect x="1235" y="634" width="37" height="27" fill="#fafafa"/><text x="1238" y="647.5" font-size="14" font-weight="bold" fill="#1a1a1a" font-family="Liberation Sans, sans-serif" textLength="31" lengthAdjust="spacingAndGlyphs">0.00</text><text x="1236" y="660.5" font-size="14" font-weight="bold" fill="#1a1a1a" font-family="Liberation Sans, sans-serif" textLength="34" lengthAdjust="spacingAndGlyphs">0+00</text><rect x="1281.5" y="634.5" width="238" height="27" fill="url(#cmbg)" stroke="#b9b9b9" stroke-width="1.2"/><text x="1286" y="654" font-size="14.5" fill="#141414" stroke="#141414" stroke-width="0.3" font-family="Liberation Sans, sans-serif">0+000.00</text><path d="M1501.5 646.0 L1507 651.5 L1512.5 646.0" fill="none" stroke="#3a3a3a" stroke-width="1.4"/><rect x="1237" y="672" width="62" height="33" fill="#fbfbfb" stroke="#c9c9c9" stroke-width="2.2"/><path d="M1251 697 H1276 C1290 697 1290 683 1278 683" fill="none" stroke="#777" stroke-width="1.4"/><path d="M1250 685 L1256 680 L1262 690 Z" fill="none" stroke="#555" stroke-width="1.2"/><circle cx="1268" cy="686" r="4" fill="none" stroke="#c0392b" stroke-width="2.2"/><path d="M1251 691.60 Q1254.70 697 1251 702.40 Q1247.30 697 1251 691.60Z" fill="#b34f38" stroke="#e8906a" stroke-width="0.8" stroke-opacity="0.5" transform="rotate(0 1251 697)"/><path d="M1263 691.60 Q1266.70 697 1263 702.40 Q1259.30 697 1263 691.60Z" fill="#b34f38" stroke="#e8906a" stroke-width="0.8" stroke-opacity="0.5" transform="rotate(0 1263 697)"/><path d="M1276 691.60 Q1279.70 697 1276 702.40 Q1272.30 697 1276 691.60Z" fill="#b34f38" stroke="#e8906a" stroke-width="0.8" stroke-opacity="0.5" transform="rotate(0 1276 697)"/><path d="M1276 677.60 Q1279.70 683 1276 688.40 Q1272.30 683 1276 677.60Z" fill="#b34f38" stroke="#e8906a" stroke-width="0.8" stroke-opacity="0.5" transform="rotate(0 1276 683)"/><text x="1307" y="696.4" font-size="15" fill="#1a1a1a" stroke="#1a1a1a" stroke-width="0.3" font-family="Liberation Sans, sans-serif">Specified</text><text x="1241" y="737.9" font-size="15.3" fill="#1a1a1a" stroke="#1a1a1a" stroke-width="0.3" font-family="Liberation Sans, sans-serif">Starting station:</text><rect x="1401.5" y="717.5" width="118" height="29" fill="#fff" stroke="#8a8a8a" stroke-width="1.2"/><text x="1461" y="736.6" font-size="14.5" fill="#141414" stroke="#141414" stroke-width="0.3" text-anchor="middle" font-family="Liberation Sans, sans-serif">50</text><rect x="1228.5" y="764.5" width="300" height="97" fill="none" stroke="#7a7a7a" stroke-width="1.6"/><rect x="1234" y="771" width="62" height="33" fill="#fbfbfb" stroke="#c9c9c9" stroke-width="2.2"/><path d="M1247 797 H1278 C1290 797 1290 782 1280 782" fill="none" stroke="#808890" stroke-width="1.4"/><path d="M1248 784.5 H1264 M1256 776.5 V792.5" stroke="#7fe0c8" stroke-width="6.5" stroke-opacity="0.6"/><path d="M1248 784.5 H1264 M1256 776.5 V792.5" stroke="#000" stroke-width="4.4"/><path d="M1247 791.60 Q1250.70 797 1247 802.40 Q1243.30 797 1247 791.60Z" fill="#b34f38" stroke="#e8906a" stroke-width="0.8" stroke-opacity="0.5" transform="rotate(0 1247 797)"/><path d="M1262.7 791.60 Q1266.40 797 1262.7 802.40 Q1259.00 797 1262.7 791.60Z" fill="#b34f38" stroke="#e8906a" stroke-width="0.8" stroke-opacity="0.5" transform="rotate(0 1262.7 797)"/><path d="M1278 791.60 Q1281.70 797 1278 802.40 Q1274.30 797 1278 791.60Z" fill="#b34f38" stroke="#e8906a" stroke-width="0.8" stroke-opacity="0.5" transform="rotate(0 1278 797)"/><path d="M1278 776.10 Q1281.70 781.5 1278 786.90 Q1274.30 781.5 1278 776.10Z" fill="#b34f38" stroke="#e8906a" stroke-width="0.8" stroke-opacity="0.5" transform="rotate(0 1278 781.5)"/><rect x="1234" y="821" width="62" height="34" fill="#fbfbfb" stroke="#c9c9c9" stroke-width="2.2"/><path d="M1241 847 H1257 L1275 835 L1289 844" fill="none" stroke="#777" stroke-width="1.4"/><path d="M1247 835 H1264 M1255.5 827 V843" stroke="#000840" stroke-width="4.6"/><path d="M1241.5 841.60 Q1245.20 847 1241.5 852.40 Q1237.80 847 1241.5 841.60Z" fill="#b34f38" stroke="#e8906a" stroke-width="0.8" stroke-opacity="0.5" transform="rotate(0 1241.5 847)"/><path d="M1257 841.60 Q1260.70 847 1257 852.40 Q1253.30 847 1257 841.60Z" fill="#b34f38" stroke="#e8906a" stroke-width="0.8" stroke-opacity="0.5" transform="rotate(0 1257 847)"/><path d="M1275 829.60 Q1278.70 835 1275 840.40 Q1271.30 835 1275 829.60Z" fill="#b34f38" stroke="#e8906a" stroke-width="0.8" stroke-opacity="0.5" transform="rotate(-50 1275 835)"/><path d="M1289 838.60 Q1292.70 844 1289 849.40 Q1285.30 844 1289 838.60Z" fill="#b34f38" stroke="#e8906a" stroke-width="0.8" stroke-opacity="0.5" transform="rotate(40 1289 844)"/><rect x="1342" y="821" width="62" height="34" fill="#fbfbfb" stroke="#c9c9c9" stroke-width="2.2"/><path d="M1348 841 L1363 850 L1380 836 L1394 846" fill="none" stroke="#777" stroke-width="1.4"/><path d="M1344 833 H1360 M1352 825 V841" stroke="#e8e860" stroke-width="6.5" stroke-opacity="0.7"/><path d="M1344 833 H1360 M1352 825 V841" stroke="#000" stroke-width="4.4"/><path d="M1364.5 829 V839 M1382 843 V851" stroke="#111" stroke-width="1.6"/><path d="M1348.5 835.60 Q1352.20 841 1348.5 846.40 Q1344.80 841 1348.5 835.60Z" fill="#b34f38" stroke="#e8906a" stroke-width="0.8" stroke-opacity="0.5" transform="rotate(40 1348.5 841)"/><path d="M1363.5 843.60 Q1367.20 849 1363.5 854.40 Q1359.80 849 1363.5 843.60Z" fill="#b34f38" stroke="#e8906a" stroke-width="0.8" stroke-opacity="0.5" transform="rotate(0 1363.5 849)"/><path d="M1381 829.60 Q1384.70 835 1381 840.40 Q1377.30 835 1381 829.60Z" fill="#b34f38" stroke="#e8906a" stroke-width="0.8" stroke-opacity="0.5" transform="rotate(0 1381 835)"/><path d="M1396 840.60 Q1399.70 846 1396 851.40 Q1392.30 846 1396 840.60Z" fill="#b34f38" stroke="#e8906a" stroke-width="0.8" stroke-opacity="0.5" transform="rotate(40 1396 846)"/><rect x="1449" y="821" width="62" height="34" fill="#fbfbfb" stroke="#c9c9c9" stroke-width="2.2"/><path d="M1459 846 H1490 C1502 846 1502 833 1492 833" fill="none" stroke="#777" stroke-width="1.3"/><path d="M1452 831 H1468 M1460 823 V839" stroke="#80e080" stroke-width="6.5" stroke-opacity="0.6"/><path d="M1452 831 H1468 M1460 823 V839" stroke="#001800" stroke-width="4.4"/><path d="M1460 841.60 Q1463.70 847 1460 852.40 Q1456.30 847 1460 841.60Z" fill="#b34f38" stroke="#e8906a" stroke-width="0.8" stroke-opacity="0.5" transform="rotate(0 1460 847)"/><path d="M1474.5 841.60 Q1478.20 847 1474.5 852.40 Q1470.80 847 1474.5 841.60Z" fill="#b34f38" stroke="#e8906a" stroke-width="0.8" stroke-opacity="0.5" transform="rotate(0 1474.5 847)"/><path d="M1489 841.60 Q1492.70 847 1489 852.40 Q1485.30 847 1489 841.60Z" fill="#b34f38" stroke="#e8906a" stroke-width="0.8" stroke-opacity="0.5" transform="rotate(0 1489 847)"/><path d="M1490 826.60 Q1493.70 832 1490 837.40 Q1486.30 832 1490 826.60Z" fill="#b34f38" stroke="#e8906a" stroke-width="0.8" stroke-opacity="0.5" transform="rotate(0 1490 832)"/><g fill="#000"><circle cx="1467" cy="847" r="1.8"/><circle cx="1482" cy="847" r="1.8"/><circle cx="1497" cy="847" r="1.8"/><circle cx="1497" cy="834" r="1.8"/></g><rect x="1228.5" y="872.5" width="300" height="52" fill="none" stroke="#7a7a7a" stroke-width="1.6"/><rect x="1237" y="880" width="62" height="33" fill="#fbfbfb" stroke="#c9c9c9" stroke-width="2.2"/><path d="M1250 906 H1276 C1290 906 1290 892 1279 892" fill="none" stroke="#777" stroke-width="1.3"/><path d="M1239 888 H1254 M1246.5 880.5 V895.5" stroke="#e8e860" stroke-width="6.5" stroke-opacity="0.7"/><path d="M1239 888 H1254 M1246.5 880.5 V895.5" stroke="#000" stroke-width="4.4"/><path d="M1250 900.60 Q1253.70 906 1250 911.40 Q1246.30 906 1250 900.60Z" fill="#b34f38" stroke="#e8906a" stroke-width="0.8" stroke-opacity="0.5" transform="rotate(0 1250 906)"/><path d="M1263 900.60 Q1266.70 906 1263 911.40 Q1259.30 906 1263 900.60Z" fill="#b34f38" stroke="#e8906a" stroke-width="0.8" stroke-opacity="0.5" transform="rotate(0 1263 906)"/><path d="M1277 900.60 Q1280.70 906 1277 911.40 Q1273.30 906 1277 900.60Z" fill="#b34f38" stroke="#e8906a" stroke-width="0.8" stroke-opacity="0.5" transform="rotate(0 1277 906)"/><path d="M1277 886.60 Q1280.70 892 1277 897.40 Q1273.30 892 1277 886.60Z" fill="#b34f38" stroke="#e8906a" stroke-width="0.8" stroke-opacity="0.5" transform="rotate(0 1277 892)"/><g fill="#000"><circle cx="1257.5" cy="893" r="1.8"/><circle cx="1269" cy="888" r="1.8"/><circle cx="1292" cy="889" r="1.8"/><circle cx="1292" cy="906" r="1.8"/></g><rect x="1323" y="880" width="61" height="33" fill="#fbfbfb" stroke="#c9c9c9" stroke-width="2.2"/><path d="M1334 906 H1361 C1375 906 1375 892 1364 892" fill="none" stroke="#777" stroke-width="1.3"/><path d="M1345 889 L1352 885 L1358.5 892 Z" fill="none" stroke="#333" stroke-width="1.3"/><path d="M1371 884 L1380 890 M1371 911 L1379 904" stroke="#111" stroke-width="2"/><path d="M1334 900.60 Q1337.70 906 1334 911.40 Q1330.30 906 1334 900.60Z" fill="#b34f38" stroke="#e8906a" stroke-width="0.8" stroke-opacity="0.5" transform="rotate(0 1334 906)"/><path d="M1348 900.60 Q1351.70 906 1348 911.40 Q1344.30 906 1348 900.60Z" fill="#b34f38" stroke="#e8906a" stroke-width="0.8" stroke-opacity="0.5" transform="rotate(0 1348 906)"/><path d="M1362 900.60 Q1365.70 906 1362 911.40 Q1358.30 906 1362 900.60Z" fill="#b34f38" stroke="#e8906a" stroke-width="0.8" stroke-opacity="0.5" transform="rotate(0 1362 906)"/><path d="M1362 886.60 Q1365.70 892 1362 897.40 Q1358.30 892 1362 886.60Z" fill="#b34f38" stroke="#e8906a" stroke-width="0.8" stroke-opacity="0.5" transform="rotate(0 1362 892)"/><g fill="#000"><circle cx="1335" cy="896" r="1.8"/><circle cx="1357.5" cy="898" r="1.8"/></g><rect x="1401.5" y="891.5" width="16" height="16" fill="#fff" stroke="#333" stroke-width="1.3"/><text x="1423.5" y="905.5" font-size="15.5" fill="#1a1a1a" stroke="#1a1a1a" stroke-width="0.3" font-family="Liberation Sans, sans-serif">Offset</text><rect x="1228.5" y="934.5" width="300" height="50" fill="none" stroke="#7a7a7a" stroke-width="1.6"/><rect x="1241" y="945" width="62" height="35" fill="#fbfbfb" stroke="#c9c9c9" stroke-width="2.2"/><path d="M1253 971 H1283 C1297 971 1297 956 1285 956" fill="none" stroke="#8a9090" stroke-width="1.4"/><path d="M1258 966 H1279" stroke="#666" stroke-width="1.3"/><path d="M1264 964 L1278 952" stroke="#c8b070" stroke-width="4"/><circle cx="1265" cy="963" r="3" fill="#c0601a"/><path d="M1254 965.60 Q1257.70 971 1254 976.40 Q1250.30 971 1254 965.60Z" fill="#b34f38" stroke="#e8906a" stroke-width="0.8" stroke-opacity="0.5" transform="rotate(0 1254 971)"/><path d="M1269 965.60 Q1272.70 971 1269 976.40 Q1265.30 971 1269 965.60Z" fill="#b34f38" stroke="#e8906a" stroke-width="0.8" stroke-opacity="0.5" transform="rotate(0 1269 971)"/><path d="M1284 965.60 Q1287.70 971 1284 976.40 Q1280.30 971 1284 965.60Z" fill="#b34f38" stroke="#e8906a" stroke-width="0.8" stroke-opacity="0.5" transform="rotate(0 1284 971)"/><path d="M1284 950.60 Q1287.70 956 1284 961.40 Q1280.30 956 1284 950.60Z" fill="#b34f38" stroke="#e8906a" stroke-width="0.8" stroke-opacity="0.5" transform="rotate(0 1284 956)"/><rect x="1342" y="945" width="62" height="35" fill="#fbfbfb" stroke="#c9c9c9" stroke-width="2.2"/><path d="M1359 971 H1383 C1395 971 1395 956 1384 956" fill="none" stroke="#888" stroke-width="1.4"/><rect x="1359" y="952" width="12" height="14" fill="#eef" stroke="#556" stroke-width="1"/><rect x="1356" y="955" width="12" height="14" fill="#dde" stroke="#556" stroke-width="1"/><path d="M1359 965.60 Q1362.70 971 1359 976.40 Q1355.30 971 1359 965.60Z" fill="#b34f38" stroke="#e8906a" stroke-width="0.8" stroke-opacity="0.5" transform="rotate(0 1359 971)"/><path d="M1371 965.60 Q1374.70 971 1371 976.40 Q1367.30 971 1371 965.60Z" fill="#b34f38" stroke="#e8906a" stroke-width="0.8" stroke-opacity="0.5" transform="rotate(0 1371 971)"/><path d="M1384 965.60 Q1387.70 971 1384 976.40 Q1380.30 971 1384 965.60Z" fill="#b34f38" stroke="#e8906a" stroke-width="0.8" stroke-opacity="0.5" transform="rotate(0 1384 971)"/><path d="M1384 950.60 Q1387.70 956 1384 961.40 Q1380.30 956 1384 950.60Z" fill="#b34f38" stroke="#e8906a" stroke-width="0.8" stroke-opacity="0.5" transform="rotate(0 1384 956)"/><rect x="1449" y="945" width="62" height="35" fill="#fbfbfb" stroke="#c9c9c9" stroke-width="2.2"/><rect x="1466.5" y="952" width="14" height="13" rx="1.5" fill="#1a4f9a"/><text x="1473.5" y="963" font-size="12" font-weight="bold" fill="#fff" text-anchor="middle" font-family="Liberation Sans, sans-serif">?</text><path d="M1461 971 H1492 C1504 971 1504 956 1492 956" fill="none" stroke="#888" stroke-width="1.4"/><path d="M1461 965.60 Q1464.70 971 1461 976.40 Q1457.30 971 1461 965.60Z" fill="#b34f38" stroke="#e8906a" stroke-width="0.8" stroke-opacity="0.5" transform="rotate(0 1461 971)"/><path d="M1476 965.60 Q1479.70 971 1476 976.40 Q1472.30 971 1476 965.60Z" fill="#b34f38" stroke="#e8906a" stroke-width="0.8" stroke-opacity="0.5" transform="rotate(0 1476 971)"/><path d="M1492 965.60 Q1495.70 971 1492 976.40 Q1488.30 971 1492 965.60Z" fill="#b34f38" stroke="#e8906a" stroke-width="0.8" stroke-opacity="0.5" transform="rotate(0 1492 971)"/><path d="M1492 950.60 Q1495.70 956 1492 961.40 Q1488.30 956 1492 950.60Z" fill="#b34f38" stroke="#e8906a" stroke-width="0.8" stroke-opacity="0.5" transform="rotate(0 1492 956)"/>
<polygon points="1283,786 1537.5,741 1537.5,761 1856,761 1856,811 1537.5,811 1537.5,833" fill="url(#arrg)" stroke="#d8ecee" stroke-width="2.4" stroke-linejoin="miter"/><text x="1427" y="793.5" font-size="31" fill="#fff6ee" font-family="Liberation Sans, sans-serif" textLength="386" lengthAdjust="spacingAndGlyphs">Click On Draw Station Lines</text>
</svg>
</body></html>
